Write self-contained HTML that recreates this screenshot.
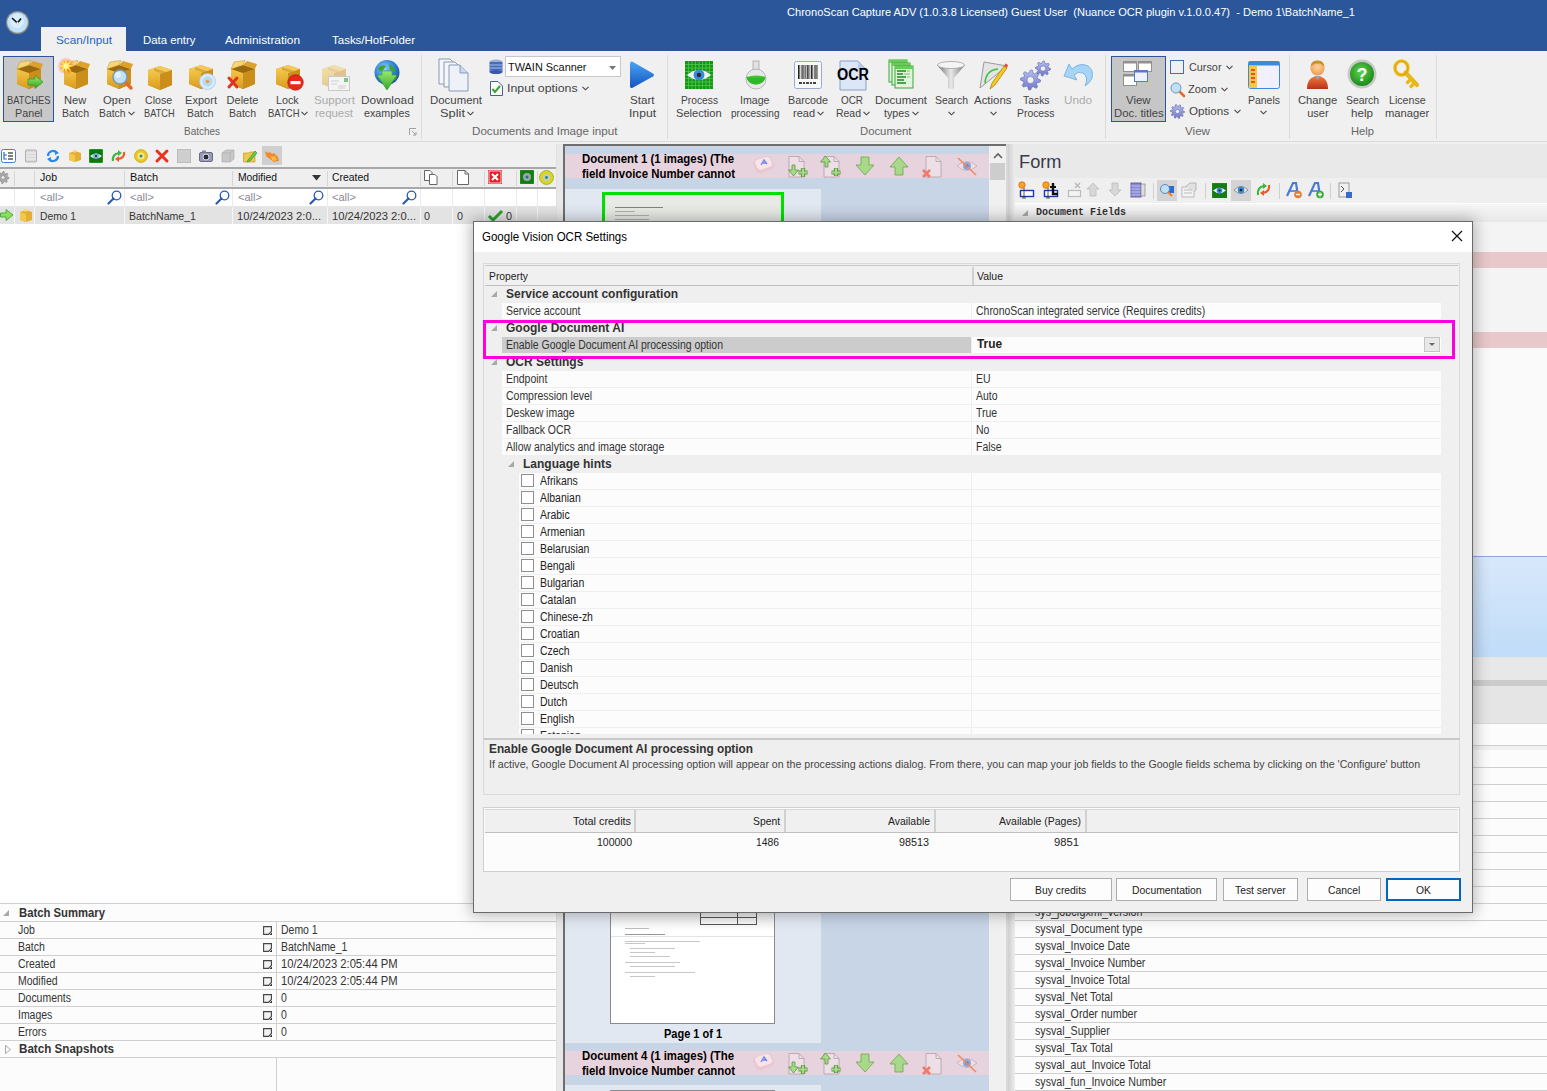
<!DOCTYPE html>
<html><head><meta charset="utf-8">
<style>
*{margin:0;padding:0;box-sizing:border-box}
html,body{width:1547px;height:1091px;overflow:hidden;background:#F0F0F0;font-family:"Liberation Sans",sans-serif;font-size:12px;color:#222;position:relative}
.a{position:absolute}
.t{position:absolute;white-space:nowrap}
svg{position:absolute;overflow:visible}
</style></head><body>

<svg width="0" height="0" style="position:absolute">
<defs>
<linearGradient id="gBoxF" x1="0" y1="0" x2="0" y2="1"><stop offset="0" stop-color="#F5C84A"/><stop offset="1" stop-color="#D89A1E"/></linearGradient>
<linearGradient id="gBoxS" x1="0" y1="0" x2="0" y2="1"><stop offset="0" stop-color="#E2AE34"/><stop offset="1" stop-color="#B98719"/></linearGradient>
<linearGradient id="gGreen" x1="0" y1="0" x2="0" y2="1"><stop offset="0" stop-color="#9BEA6A"/><stop offset="1" stop-color="#2FA52A"/></linearGradient>
<radialGradient id="gGlobe" cx="0.4" cy="0.35" r="0.7"><stop offset="0" stop-color="#8FD0FF"/><stop offset="0.6" stop-color="#2F7FD8"/><stop offset="1" stop-color="#1C4FA0"/></radialGradient>
<linearGradient id="gPlay" x1="0" y1="0" x2="0" y2="1"><stop offset="0" stop-color="#4AA3F5"/><stop offset="1" stop-color="#1356C0"/></linearGradient>
<radialGradient id="gHelp" cx="0.45" cy="0.4" r="0.6"><stop offset="0" stop-color="#5FD64A"/><stop offset="1" stop-color="#1C8A1C"/></radialGradient>
<radialGradient id="gUser" cx="0.5" cy="0.4" r="0.6"><stop offset="0" stop-color="#FFD3A0"/><stop offset="1" stop-color="#F09A4A"/></radialGradient>
<linearGradient id="gShirt" x1="0" y1="0" x2="0" y2="1"><stop offset="0" stop-color="#F07A3A"/><stop offset="1" stop-color="#B8321A"/></linearGradient>
<linearGradient id="gFunnel" x1="0" y1="0" x2="1" y2="0"><stop offset="0" stop-color="#6E6E6E"/><stop offset="0.5" stop-color="#E8E8E8"/><stop offset="1" stop-color="#7A7A7A"/></linearGradient>
<linearGradient id="gGear" x1="0" y1="0" x2="0" y2="1"><stop offset="0" stop-color="#B8BFF0"/><stop offset="1" stop-color="#6E78C8"/></linearGradient>
</defs></svg>
<div class="a" style="left:0px;top:0px;width:1547px;height:51px;background:#2B579A;"></div>
<div class="t" style="left:787.0px;top:5.2px;font-size:11px;line-height:14px;font-family:'Liberation Sans',sans-serif;font-weight:normal;color:#FFFFFF;transform:scaleX(1.0069);transform-origin:0 0;">ChronoScan Capture ADV (1.0.3.8 Licensed) Guest User  (Nuance OCR plugin v.1.0.0.47)  - Demo 1\BatchName_1</div>
<svg class="a" style="left:5px;top:10px" width="25" height="25" viewBox="0 0 25 25"><circle cx="12.5" cy="12.5" r="11.5" fill="#8E8A84"/><circle cx="12.5" cy="12.5" r="10.3" fill="#BFE2FA"/><circle cx="12" cy="11" r="7" fill="#D8EEFC"/><path d="M7 8 L12.5 13 L16 8.5" fill="none" stroke="#111" stroke-width="1.6"/><circle cx="12.5" cy="13" r="1.1" fill="#fff"/></svg>
<div class="a" style="left:41px;top:27px;width:85px;height:25px;background:#F0F0F0;"></div>
<div class="t" style="left:56.0px;top:33.2px;font-size:11px;line-height:14px;font-family:'Liberation Sans',sans-serif;font-weight:normal;color:#2066C8;transform:scaleX(1.0648);transform-origin:0 0;">Scan/Input</div>
<div class="t" style="left:142.5px;top:33.2px;font-size:11px;line-height:14px;font-family:'Liberation Sans',sans-serif;font-weight:normal;color:#FFFFFF;transform:scaleX(1.0346);transform-origin:0 0;">Data entry</div>
<div class="t" style="left:225.4px;top:33.2px;font-size:11px;line-height:14px;font-family:'Liberation Sans',sans-serif;font-weight:normal;color:#FFFFFF;transform:scaleX(1.0762);transform-origin:0 0;">Administration</div>
<div class="t" style="left:332.0px;top:33.2px;font-size:11px;line-height:14px;font-family:'Liberation Sans',sans-serif;font-weight:normal;color:#FFFFFF;transform:scaleX(1.0445);transform-origin:0 0;">Tasks/HotFolder</div>
<div class="a" style="left:0px;top:51px;width:1547px;height:91px;background:#F0F0F0;"></div>
<div class="a" style="left:0px;top:141px;width:1547px;height:1px;background:#DADADA;"></div>
<div class="a" style="left:421px;top:55px;width:1px;height:84px;background:#DADADA;"></div>
<div class="a" style="left:667px;top:55px;width:1px;height:84px;background:#DADADA;"></div>
<div class="a" style="left:1105px;top:55px;width:1px;height:84px;background:#DADADA;"></div>
<div class="a" style="left:1289px;top:55px;width:1px;height:84px;background:#DADADA;"></div>
<div class="a" style="left:1436px;top:55px;width:1px;height:84px;background:#DADADA;"></div>
<div class="t" style="left:184.0px;top:124.2px;font-size:11px;line-height:14px;font-family:'Liberation Sans',sans-serif;font-weight:normal;color:#666;transform:scaleX(0.9058);transform-origin:0 0;">Batches</div>
<div class="t" style="left:472.3px;top:124.2px;font-size:11px;line-height:14px;font-family:'Liberation Sans',sans-serif;font-weight:normal;color:#666;transform:scaleX(1.0569);transform-origin:0 0;">Documents and Image input</div>
<div class="t" style="left:860.2px;top:124.2px;font-size:11px;line-height:14px;font-family:'Liberation Sans',sans-serif;font-weight:normal;color:#666;transform:scaleX(1.0273);transform-origin:0 0;">Document</div>
<div class="t" style="left:1185.1px;top:124.2px;font-size:11px;line-height:14px;font-family:'Liberation Sans',sans-serif;font-weight:normal;color:#666;transform:scaleX(1.0574);transform-origin:0 0;">View</div>
<div class="t" style="left:1351.4px;top:124.2px;font-size:11px;line-height:14px;font-family:'Liberation Sans',sans-serif;font-weight:normal;color:#666;transform:scaleX(1.0167);transform-origin:0 0;">Help</div>
<svg class="a" style="left:409px;top:128px" width="8" height="8" viewBox="0 0 8 8"><path d="M0.5 0.5 H7 M0.5 0.5 V7" stroke="#A0A0A0" stroke-width="1" fill="none"/><path d="M3 3 L7 7 M7 4 V7 H4" stroke="#A0A0A0" stroke-width="1" fill="none"/></svg>
<div class="a" style="left:3px;top:56px;width:51px;height:66px;background:#C8C8C8;border:1px solid #2B579A;"></div>
<div class="a" style="left:1111px;top:56px;width:55px;height:66px;background:#C6C6C6;border:1px solid #2B579A;"></div>
<svg class="a" style="left:14px;top:60px" width="30" height="30" viewBox="0 0 30 30"><g><path d="M3 9 L15 5 L27 9 L27 24 L15 29 L3 24 Z" fill="url(#gBoxS)"/><path d="M3 9 L15 13 L15 29 L3 24 Z" fill="url(#gBoxF)"/><path d="M15 13 L27 9 L27 24 L15 29 Z" fill="#CC8E1A"/><path d="M3 9 L15 13 L27 9 L15 5Z" fill="#9A6A10"/><path d="M3 9 L6 2 L17 0.5 L15 5 Z" fill="#F7D67A" stroke="#C8921E" stroke-width="0.5"/><path d="M15 5 L27 9 L29 4 L19 1Z" fill="#DDA22A"/></g></svg>
<svg class="a" style="left:27px;top:75px" width="17" height="14" viewBox="0 0 17 14"><path d="M1 4 H8 V0.5 L16 7 L8 13.5 V10 H1 Z" fill="url(#gGreen)" stroke="#3A9A2A" stroke-width="0.8"/></svg>
<svg class="a" style="left:61px;top:60px" width="30" height="30" viewBox="0 0 30 30"><g><path d="M3 9 L15 5 L27 9 L27 24 L15 29 L3 24 Z" fill="url(#gBoxS)"/><path d="M3 9 L15 13 L15 29 L3 24 Z" fill="url(#gBoxF)"/><path d="M15 13 L27 9 L27 24 L15 29 Z" fill="#CC8E1A"/><path d="M3 9 L15 13 L27 9 L15 5Z" fill="#9A6A10"/><path d="M3 9 L6 2 L17 0.5 L15 5 Z" fill="#F7D67A" stroke="#C8921E" stroke-width="0.5"/><path d="M15 5 L27 9 L29 4 L19 1Z" fill="#DDA22A"/></g></svg>
<svg class="a" style="left:57px;top:57px" width="18" height="18" viewBox="0 0 18 18"><defs><radialGradient id="gSpark"><stop offset="0" stop-color="#FF3A1A" stop-opacity="0.9"/><stop offset="1" stop-color="#FF3A1A" stop-opacity="0"/></radialGradient></defs><circle cx="9" cy="9" r="9" fill="url(#gSpark)"/><path d="M9.0,1.0 L10.2,6.0 L14.7,3.3 L12.0,7.8 L17.0,9.0 L12.0,10.2 L14.7,14.7 L10.2,12.0 L9.0,17.0 L7.8,12.0 L3.3,14.7 L6.0,10.2 L1.0,9.0 L6.0,7.8 L3.3,3.3 L7.8,6.0 Z" fill="#FFE63A"/><circle cx="9" cy="9" r="2.5" fill="#FFF6A0"/></svg>
<svg class="a" style="left:104px;top:60px" width="30" height="30" viewBox="0 0 30 30"><g><path d="M3 9 L15 5 L27 9 L27 24 L15 29 L3 24 Z" fill="url(#gBoxS)"/><path d="M3 9 L15 13 L15 29 L3 24 Z" fill="url(#gBoxF)"/><path d="M15 13 L27 9 L27 24 L15 29 Z" fill="#CC8E1A"/><path d="M3 9 L15 13 L27 9 L15 5Z" fill="#9A6A10"/><path d="M3 9 L6 2 L17 0.5 L15 5 Z" fill="#F7D67A" stroke="#C8921E" stroke-width="0.5"/><path d="M15 5 L27 9 L29 4 L19 1Z" fill="#DDA22A"/></g></svg>
<svg class="a" style="left:111px;top:68px" width="22" height="22" viewBox="0 0 22 22"><path d="M13 13 L20 20" stroke="#E86A2A" stroke-width="3.5" stroke-linecap="round"/><circle cx="9" cy="9" r="7" fill="#BFE0F5" stroke="#7A9AB0" stroke-width="1.5"/><circle cx="7" cy="7" r="3" fill="#E8F6FF" opacity="0.8"/></svg>
<svg class="a" style="left:145px;top:61px" width="30" height="30" viewBox="0 0 30 30"><g><path d="M3 9 L15 5 L27 9 L27 24 L15 29 L3 24 Z" fill="url(#gBoxS)"/><path d="M3 9 L15 13 L15 29 L3 24 Z" fill="url(#gBoxF)"/><path d="M15 13 L27 9 L27 24 L15 29 Z" fill="#CC8E1A"/><path d="M3 9 L15 5 L27 9 L15 13 Z" fill="#F2C95A"/><path d="M9 7 L21 11 L21 14 L18 13 L9 10Z" fill="#C99524" opacity="0.6"/></g></svg>
<svg class="a" style="left:186px;top:60px" width="30" height="30" viewBox="0 0 30 30"><g><path d="M3 9 L15 5 L27 9 L27 24 L15 29 L3 24 Z" fill="url(#gBoxS)"/><path d="M3 9 L15 13 L15 29 L3 24 Z" fill="url(#gBoxF)"/><path d="M15 13 L27 9 L27 24 L15 29 Z" fill="#CC8E1A"/><path d="M3 9 L15 5 L27 9 L15 13 Z" fill="#F2C95A"/><path d="M9 7 L21 11 L21 14 L18 13 L9 10Z" fill="#C99524" opacity="0.6"/></g></svg>
<svg class="a" style="left:199px;top:73px" width="17" height="17" viewBox="0 0 17 17"><circle cx="8.5" cy="8.5" r="8" fill="#D8EBFA" stroke="#A8C8E8" stroke-width="0.8"/><circle cx="8.5" cy="8.5" r="5" fill="#B8D8F5"/><circle cx="8.5" cy="8.5" r="1.8" fill="#E8A23A"/></svg>
<svg class="a" style="left:228px;top:60px" width="30" height="30" viewBox="0 0 30 30"><g><path d="M3 9 L15 5 L27 9 L27 24 L15 29 L3 24 Z" fill="url(#gBoxS)"/><path d="M3 9 L15 13 L15 29 L3 24 Z" fill="url(#gBoxF)"/><path d="M15 13 L27 9 L27 24 L15 29 Z" fill="#CC8E1A"/><path d="M3 9 L15 13 L27 9 L15 5Z" fill="#9A6A10"/><path d="M3 9 L6 2 L17 0.5 L15 5 Z" fill="#F7D67A" stroke="#C8921E" stroke-width="0.5"/><path d="M15 5 L27 9 L29 4 L19 1Z" fill="#DDA22A"/></g></svg>
<svg class="a" style="left:227px;top:76px" width="12" height="13" viewBox="0 0 12 13"><path d="M2 2 L10 11 M10 2 L2 11" stroke="#E2341E" stroke-width="3" stroke-linecap="round"/></svg>
<svg class="a" style="left:273px;top:60px" width="30" height="30" viewBox="0 0 30 30"><g><path d="M3 9 L15 5 L27 9 L27 24 L15 29 L3 24 Z" fill="url(#gBoxS)"/><path d="M3 9 L15 13 L15 29 L3 24 Z" fill="url(#gBoxF)"/><path d="M15 13 L27 9 L27 24 L15 29 Z" fill="#CC8E1A"/><path d="M3 9 L15 5 L27 9 L15 13 Z" fill="#F2C95A"/><path d="M9 7 L21 11 L21 14 L18 13 L9 10Z" fill="#C99524" opacity="0.6"/></g></svg>
<svg class="a" style="left:287px;top:74px" width="17" height="17" viewBox="0 0 17 17"><circle cx="8.5" cy="8.5" r="7.8" fill="#E8281A" stroke="#9A1A10" stroke-width="0.6"/><rect x="3.5" y="7" width="10" height="3.2" fill="#FFF"/></svg>
<svg class="a" style="left:319px;top:60px" width="30" height="30" viewBox="0 0 30 30"><g opacity="0.45"><path d="M3 9 L15 5 L27 9 L27 24 L15 29 L3 24 Z" fill="url(#gBoxS)"/><path d="M3 9 L15 13 L15 29 L3 24 Z" fill="url(#gBoxF)"/><path d="M15 13 L27 9 L27 24 L15 29 Z" fill="#CC8E1A"/><path d="M3 9 L15 5 L27 9 L15 13 Z" fill="#F2C95A"/><path d="M9 7 L21 11 L21 14 L18 13 L9 10Z" fill="#C99524" opacity="0.6"/></g></svg>
<svg class="a" style="left:328px;top:76px" width="22" height="15" viewBox="0 0 22 15"><rect x="0.5" y="0.5" width="21" height="14" fill="#F4F4F4" stroke="#C8C8C8"/><rect x="16" y="2" width="4" height="4" fill="#7CC87C"/><path d="M3 5h8M3 8h6M10 10h8M10 12h7" stroke="#CFCFCF"/></svg>
<svg class="a" style="left:374px;top:60px" width="27" height="31" viewBox="0 0 27 31"><circle cx="13" cy="12.5" r="12.5" fill="url(#gGlobe)"/><path d="M4 8 Q8 4 12 6 Q10 10 6 12 Z M15 4 Q20 6 22 11 Q18 12 16 9Z M18 16 Q22 15 23 18 Q20 21 18 20Z" fill="#3DA52E"/><path d="M3 15 H8 V11 H18 V15 H23 L13 30 Z" fill="url(#gGreen)" stroke="#2E9A24" stroke-width="0.6"/></svg>
<div class="t" style="left:6.8px;top:93.2px;font-size:11px;line-height:14px;font-family:'Liberation Sans',sans-serif;font-weight:normal;color:#444;transform:scaleX(0.8486);transform-origin:0 0;">BATCHES</div>
<div class="t" style="left:14.8px;top:106.2px;font-size:11px;line-height:14px;font-family:'Liberation Sans',sans-serif;font-weight:normal;color:#444;transform:scaleX(0.9775);transform-origin:0 0;">Panel</div>
<div class="t" style="left:63.9px;top:93.2px;font-size:11px;line-height:14px;font-family:'Liberation Sans',sans-serif;font-weight:normal;color:#444;transform:scaleX(1.0089);transform-origin:0 0;">New</div>
<div class="t" style="left:61.5px;top:106.2px;font-size:11px;line-height:14px;font-family:'Liberation Sans',sans-serif;font-weight:normal;color:#444;transform:scaleX(0.9599);transform-origin:0 0;">Batch</div>
<div class="t" style="left:102.7px;top:93.2px;font-size:11px;line-height:14px;font-family:'Liberation Sans',sans-serif;font-weight:normal;color:#444;transform:scaleX(1.0294);transform-origin:0 0;">Open</div>
<div class="t" style="left:99.2px;top:106.2px;font-size:11px;line-height:14px;font-family:'Liberation Sans',sans-serif;font-weight:normal;color:#444;transform:scaleX(0.9421);transform-origin:0 0;">Batch</div>
<svg class="a" style="left:127.75px;top:111px" width="7" height="5" viewBox="0 0 7 5"><path d="M0.5 0.8 L3.5 3.8 L6.5 0.8" fill="none" stroke="#444" stroke-width="1.1"/></svg>
<div class="t" style="left:145.4px;top:93.2px;font-size:11px;line-height:14px;font-family:'Liberation Sans',sans-serif;font-weight:normal;color:#444;transform:scaleX(0.9637);transform-origin:0 0;">Close</div>
<div class="t" style="left:143.7px;top:106.2px;font-size:11px;line-height:14px;font-family:'Liberation Sans',sans-serif;font-weight:normal;color:#444;transform:scaleX(0.8391);transform-origin:0 0;">BATCH</div>
<div class="t" style="left:184.5px;top:93.2px;font-size:11px;line-height:14px;font-family:'Liberation Sans',sans-serif;font-weight:normal;color:#444;transform:scaleX(1.0066);transform-origin:0 0;">Export</div>
<div class="t" style="left:187.2px;top:106.2px;font-size:11px;line-height:14px;font-family:'Liberation Sans',sans-serif;font-weight:normal;color:#444;transform:scaleX(0.9421);transform-origin:0 0;">Batch</div>
<div class="t" style="left:226.6px;top:93.2px;font-size:11px;line-height:14px;font-family:'Liberation Sans',sans-serif;font-weight:normal;color:#444;">Delete</div>
<div class="t" style="left:229.0px;top:106.2px;font-size:11px;line-height:14px;font-family:'Liberation Sans',sans-serif;font-weight:normal;color:#444;transform:scaleX(0.9599);transform-origin:0 0;">Batch</div>
<div class="t" style="left:275.9px;top:93.2px;font-size:11px;line-height:14px;font-family:'Liberation Sans',sans-serif;font-weight:normal;color:#444;transform:scaleX(0.9770);transform-origin:0 0;">Lock</div>
<div class="t" style="left:267.6px;top:106.2px;font-size:11px;line-height:14px;font-family:'Liberation Sans',sans-serif;font-weight:normal;color:#444;transform:scaleX(0.8638);transform-origin:0 0;">BATCH</div>
<svg class="a" style="left:301.05px;top:111px" width="7" height="5" viewBox="0 0 7 5"><path d="M0.5 0.8 L3.5 3.8 L6.5 0.8" fill="none" stroke="#444" stroke-width="1.1"/></svg>
<div class="t" style="left:313.6px;top:93.2px;font-size:11px;line-height:14px;font-family:'Liberation Sans',sans-serif;font-weight:normal;color:#ABABAB;transform:scaleX(1.0616);transform-origin:0 0;">Support</div>
<div class="t" style="left:315.0px;top:106.2px;font-size:11px;line-height:14px;font-family:'Liberation Sans',sans-serif;font-weight:normal;color:#ABABAB;transform:scaleX(1.0358);transform-origin:0 0;">request</div>
<div class="t" style="left:360.6px;top:93.2px;font-size:11px;line-height:14px;font-family:'Liberation Sans',sans-serif;font-weight:normal;color:#444;transform:scaleX(1.0794);transform-origin:0 0;">Download</div>
<div class="t" style="left:364.1px;top:106.2px;font-size:11px;line-height:14px;font-family:'Liberation Sans',sans-serif;font-weight:normal;color:#444;transform:scaleX(0.9729);transform-origin:0 0;">examples</div>
<svg class="a" style="left:438px;top:58px" width="33" height="34" viewBox="0 0 33 34"><path d="M1 1 H12 L18 7 V26 H1 Z" fill="#F4F6FA" stroke="#8A9AB8" stroke-width="1"/><path d="M6 4 H17 L23 10 V29 H6 Z" fill="#F4F6FA" stroke="#8A9AB8" stroke-width="1"/><path d="M11 7 H22 L30 15 V33 H11 Z" fill="#EEF2F8" stroke="#8A9AB8" stroke-width="1"/><path d="M22 7 V15 H30" fill="#C8D8EE" stroke="#8A9AB8" stroke-width="1"/></svg>
<div class="t" style="left:430.0px;top:93.2px;font-size:11px;line-height:14px;font-family:'Liberation Sans',sans-serif;font-weight:normal;color:#444;transform:scaleX(1.0373);transform-origin:0 0;">Document</div>
<div class="t" style="left:439.5px;top:106.2px;font-size:11px;line-height:14px;font-family:'Liberation Sans',sans-serif;font-weight:normal;color:#444;transform:scaleX(1.1683);transform-origin:0 0;">Split</div>
<svg class="a" style="left:466.5px;top:111px" width="7" height="5" viewBox="0 0 7 5"><path d="M0.5 0.8 L3.5 3.8 L6.5 0.8" fill="none" stroke="#444" stroke-width="1.1"/></svg>
<svg class="a" style="left:489px;top:59px" width="14" height="15" viewBox="0 0 14 15"><ellipse cx="7" cy="3" rx="6.5" ry="2.5" fill="#9AB0D8"/><rect x="0.5" y="3" width="13" height="10" fill="#4A6AB8"/><path d="M0.5 6h13M0.5 9h13M0.5 12h13" stroke="#9EC0F0" stroke-width="1"/><ellipse cx="7" cy="13" rx="6.5" ry="2" fill="#3A5AA8"/></svg>
<div class="a" style="left:505px;top:56px;width:116px;height:21px;background:#FFFFFF;border:1px solid #C8C8C8;"></div>
<div class="t" style="left:507.5px;top:60.2px;font-size:11px;line-height:14px;font-family:'Liberation Sans',sans-serif;font-weight:normal;color:#111;transform:scaleX(0.9930);transform-origin:0 0;">TWAIN Scanner</div>
<svg class="a" style="left:609px;top:66px" width="7" height="4" viewBox="0 0 7 4"><path d="M0 0 H7 L3.5 4 Z" fill="#777"/></svg>
<svg class="a" style="left:490px;top:81px" width="13" height="15" viewBox="0 0 13 15"><path d="M0.5 0.5 H8 L12.5 5 V14.5 H0.5 Z" fill="#FAFAFA" stroke="#4A6090" stroke-width="1"/><path d="M2.5 8 L5 11 L10 5" fill="none" stroke="#2EA82E" stroke-width="2"/></svg>
<div class="t" style="left:507.0px;top:81.2px;font-size:11px;line-height:14px;font-family:'Liberation Sans',sans-serif;font-weight:normal;color:#444;transform:scaleX(1.1208);transform-origin:0 0;">Input options</div>
<svg class="a" style="left:582px;top:86px" width="7" height="5" viewBox="0 0 7 5"><path d="M0.5 0.8 L3.5 3.8 L6.5 0.8" fill="none" stroke="#444" stroke-width="1.1"/></svg>
<svg class="a" style="left:629px;top:60px" width="26" height="30" viewBox="0 0 26 30"><path d="M3 1.5 Q1 1 1 4 V26 Q1 29 4 27.5 L24 16.5 Q26 15 24 13.5 L4 2 Z" fill="url(#gPlay)"/></svg>
<div class="t" style="left:629.8px;top:93.2px;font-size:11px;line-height:14px;font-family:'Liberation Sans',sans-serif;font-weight:normal;color:#444;transform:scaleX(1.0547);transform-origin:0 0;">Start</div>
<div class="t" style="left:628.5px;top:106.2px;font-size:11px;line-height:14px;font-family:'Liberation Sans',sans-serif;font-weight:normal;color:#444;transform:scaleX(1.1037);transform-origin:0 0;">Input</div>
<svg class="a" style="left:685px;top:61px" width="28" height="28" viewBox="0 0 28 28"><rect width="28" height="28" fill="#119A11"/><path d="M3.5 0 V28 M0 3.5 H28" stroke="#5CC85C" stroke-width="0.7"/><path d="M7.0 0 V28 M0 7.0 H28" stroke="#5CC85C" stroke-width="0.7"/><path d="M10.5 0 V28 M0 10.5 H28" stroke="#5CC85C" stroke-width="0.7"/><path d="M14.0 0 V28 M0 14.0 H28" stroke="#5CC85C" stroke-width="0.7"/><path d="M17.5 0 V28 M0 17.5 H28" stroke="#5CC85C" stroke-width="0.7"/><path d="M21.0 0 V28 M0 21.0 H28" stroke="#5CC85C" stroke-width="0.7"/><path d="M24.5 0 V28 M0 24.5 H28" stroke="#5CC85C" stroke-width="0.7"/><path d="M2 14 Q14 4 26 14 Q14 24 2 14 Z" fill="#F2F2F2"/><circle cx="14" cy="14" r="5.5" fill="#3A8AD8"/><circle cx="14" cy="14" r="2.2" fill="#2A2A2A"/></svg>
<div class="t" style="left:680.5px;top:93.2px;font-size:11px;line-height:14px;font-family:'Liberation Sans',sans-serif;font-weight:normal;color:#444;transform:scaleX(0.9312);transform-origin:0 0;">Process</div>
<div class="t" style="left:676.1px;top:106.2px;font-size:11px;line-height:14px;font-family:'Liberation Sans',sans-serif;font-weight:normal;color:#444;transform:scaleX(1.0099);transform-origin:0 0;">Selection</div>
<svg class="a" style="left:744px;top:60px" width="24" height="30" viewBox="0 0 24 30"><rect x="9" y="1" width="6" height="11" fill="#E2E2E2" stroke="#A8A8A8" stroke-width="0.8"/><circle cx="12" cy="19" r="10" fill="#E8E8E8" stroke="#A8A8A8" stroke-width="0.8"/><path d="M2.3 17 Q12 14 21.7 17 A10 10 0 0 1 2.3 17 Z" fill="#3FCB2A"/><path d="M2.5 17.5 A10 10 0 0 0 21.5 17.5 Z" fill="#2EB82A"/></svg>
<div class="t" style="left:740.2px;top:93.2px;font-size:11px;line-height:14px;font-family:'Liberation Sans',sans-serif;font-weight:normal;color:#444;transform:scaleX(0.9650);transform-origin:0 0;">Image</div>
<div class="t" style="left:730.8px;top:106.2px;font-size:11px;line-height:14px;font-family:'Liberation Sans',sans-serif;font-weight:normal;color:#444;transform:scaleX(0.9118);transform-origin:0 0;">processing</div>
<svg class="a" style="left:794px;top:61px" width="28" height="28" viewBox="0 0 28 28"><rect x="0.5" y="0.5" width="27" height="27" rx="2" fill="#F8F8F8" stroke="#9AAAD0"/><rect x="4.00" y="4" width="1.1" height="14" fill="#222"/><rect x="5.45" y="4" width="0.6" height="14" fill="#222"/><rect x="6.90" y="4" width="0.6" height="14" fill="#222"/><rect x="8.35" y="4" width="1.1" height="14" fill="#222"/><rect x="9.80" y="4" width="0.6" height="14" fill="#222"/><rect x="11.25" y="4" width="0.6" height="14" fill="#222"/><rect x="12.70" y="4" width="1.1" height="14" fill="#222"/><rect x="14.15" y="4" width="0.6" height="14" fill="#222"/><rect x="15.60" y="4" width="0.6" height="14" fill="#222"/><rect x="17.05" y="4" width="1.1" height="14" fill="#222"/><rect x="18.50" y="4" width="0.6" height="14" fill="#222"/><rect x="19.95" y="4" width="0.6" height="14" fill="#222"/><rect x="21.40" y="4" width="1.1" height="14" fill="#222"/><rect x="22.85" y="4" width="0.6" height="14" fill="#222"/><path d="M5 22h3M9 22h2M12 22h3M16 22h2M19 22h3" stroke="#444" stroke-width="2"/></svg>
<div class="t" style="left:788.0px;top:93.2px;font-size:11px;line-height:14px;font-family:'Liberation Sans',sans-serif;font-weight:normal;color:#444;transform:scaleX(0.9764);transform-origin:0 0;">Barcode</div>
<div class="t" style="left:793.0px;top:106.2px;font-size:11px;line-height:14px;font-family:'Liberation Sans',sans-serif;font-weight:normal;color:#444;">read</div>
<svg class="a" style="left:817.0px;top:111px" width="7" height="5" viewBox="0 0 7 5"><path d="M0.5 0.8 L3.5 3.8 L6.5 0.8" fill="none" stroke="#444" stroke-width="1.1"/></svg>
<svg class="a" style="left:836px;top:60px" width="33" height="31" viewBox="0 0 33 31"><path d="M4 1 H22 L30 9 V30 H4 Z" fill="#DCE6F6" stroke="#8AA0C8" stroke-width="1"/><path d="M22 1 V9 H30" fill="#B8CCEA"/></svg>
<div class="t" style="left:836.5px;top:64.5px;font-size:16px;line-height:20px;font-family:'Liberation Sans',sans-serif;font-weight:bold;color:#000;transform:scaleX(0.9000);transform-origin:0 0;">OCR</div>
<div class="t" style="left:841.0px;top:93.2px;font-size:11px;line-height:14px;font-family:'Liberation Sans',sans-serif;font-weight:normal;color:#444;transform:scaleX(0.9000);transform-origin:0 0;">OCR</div>
<div class="t" style="left:835.5px;top:106.2px;font-size:11px;line-height:14px;font-family:'Liberation Sans',sans-serif;font-weight:normal;color:#444;transform:scaleX(0.9507);transform-origin:0 0;">Read</div>
<svg class="a" style="left:862.5px;top:111px" width="7" height="5" viewBox="0 0 7 5"><path d="M0.5 0.8 L3.5 3.8 L6.5 0.8" fill="none" stroke="#444" stroke-width="1.1"/></svg>
<svg class="a" style="left:887px;top:59px" width="28" height="31" viewBox="0 0 28 31"><rect x="2" y="1" width="18" height="22" fill="#E2F4DC" stroke="#3AA83A" stroke-width="1"/><rect x="2" y="1" width="18" height="3" fill="#6ACB5A"/><rect x="5" y="4" width="18" height="22" fill="#E2F4DC" stroke="#3AA83A" stroke-width="1"/><rect x="5" y="4" width="18" height="3" fill="#6ACB5A"/><rect x="8" y="7" width="18" height="22" fill="#E2F4DC" stroke="#3AA83A" stroke-width="1"/><rect x="8" y="7" width="18" height="3" fill="#6ACB5A"/><path d="M10 12h9M10 15h6M10 18h9M10 21h7M10 24h9" stroke="#1E8A1E" stroke-width="1.6"/><path d="M20 12h3M17 15h6M20 18h3" stroke="#9AD88A" stroke-width="1.4"/></svg>
<div class="t" style="left:875.0px;top:93.2px;font-size:11px;line-height:14px;font-family:'Liberation Sans',sans-serif;font-weight:normal;color:#444;transform:scaleX(1.0373);transform-origin:0 0;">Document</div>
<div class="t" style="left:884.2px;top:106.2px;font-size:11px;line-height:14px;font-family:'Liberation Sans',sans-serif;font-weight:normal;color:#444;transform:scaleX(0.9699);transform-origin:0 0;">types</div>
<svg class="a" style="left:911.75px;top:111px" width="7" height="5" viewBox="0 0 7 5"><path d="M0.5 0.8 L3.5 3.8 L6.5 0.8" fill="none" stroke="#444" stroke-width="1.1"/></svg>
<svg class="a" style="left:936px;top:59px" width="30" height="32" viewBox="0 0 30 32"><path d="M1 6 Q15 -1 29 6 L18 19 V29 Q15 31 12 29 V19 Z" fill="url(#gFunnel)"/><ellipse cx="15" cy="6" rx="13.5" ry="3.5" fill="#F4F4F4" stroke="#9A9A9A" stroke-width="0.7"/></svg>
<div class="t" style="left:934.5px;top:93.2px;font-size:11px;line-height:14px;font-family:'Liberation Sans',sans-serif;font-weight:normal;color:#444;transform:scaleX(0.9469);transform-origin:0 0;">Search</div>
<svg class="a" style="left:948px;top:111px" width="7" height="5" viewBox="0 0 7 5"><path d="M0.5 0.8 L3.5 3.8 L6.5 0.8" fill="none" stroke="#444" stroke-width="1.1"/></svg>
<svg class="a" style="left:978px;top:60px" width="30" height="31" viewBox="0 0 30 31"><path d="M2 28 L6 2 L29 6 Z" fill="#E4E4E4" stroke="#9A9A9A" stroke-width="1"/><path d="M7 23 Q8 10 20 9" fill="none" stroke="#3CC23C" stroke-width="1.6"/><path d="M12 29 L14 23 L26 6 L29 8 L17 25 Z" fill="#F5C81E" stroke="#A07A10" stroke-width="0.7"/><path d="M26 6 L29 8 L30 5 L27.5 3.5Z" fill="#E84A3A"/></svg>
<div class="t" style="left:974.2px;top:93.2px;font-size:11px;line-height:14px;font-family:'Liberation Sans',sans-serif;font-weight:normal;color:#444;transform:scaleX(1.0396);transform-origin:0 0;">Actions</div>
<svg class="a" style="left:990px;top:111px" width="7" height="5" viewBox="0 0 7 5"><path d="M0.5 0.8 L3.5 3.8 L6.5 0.8" fill="none" stroke="#444" stroke-width="1.1"/></svg>
<svg class="a" style="left:1020px;top:60px" width="32" height="31" viewBox="0 0 32 31"><path d="M20.50,20.00 L20.31,21.95 L17.15,22.76 L16.49,24.00 L17.57,27.07 L16.06,28.31 L13.26,26.65 L11.90,27.06 L10.50,30.00 L8.55,29.81 L7.74,26.65 L6.50,25.99 L3.43,27.07 L2.19,25.56 L3.85,22.76 L3.44,21.40 L0.50,20.00 L0.69,18.05 L3.85,17.24 L4.51,16.00 L3.43,12.93 L4.94,11.69 L7.74,13.35 L9.10,12.94 L10.50,10.00 L12.45,10.19 L13.26,13.35 L14.50,14.01 L17.57,12.93 L18.81,14.44 L17.15,17.24 L17.56,18.60 Z" fill="url(#gGear)" stroke="#5A63A8" stroke-width="0.6"/><circle cx="10.5" cy="20" r="3.50" fill="#F0F0F0" stroke="#5A63A8" stroke-width="0.5"/><path d="M30.50,8.50 L30.36,9.96 L27.99,10.57 L27.49,11.50 L28.30,13.80 L27.17,14.74 L25.07,13.49 L24.05,13.80 L23.00,16.00 L21.54,15.86 L20.93,13.49 L20.00,12.99 L17.70,13.80 L16.76,12.67 L18.01,10.57 L17.70,9.55 L15.50,8.50 L15.64,7.04 L18.01,6.43 L18.51,5.50 L17.70,3.20 L18.83,2.26 L20.93,3.51 L21.95,3.20 L23.00,1.00 L24.46,1.14 L25.07,3.51 L26.00,4.01 L28.30,3.20 L29.24,4.33 L27.99,6.43 L28.30,7.45 Z" fill="url(#gGear)" stroke="#5A63A8" stroke-width="0.6"/><circle cx="23" cy="8.5" r="2.62" fill="#F0F0F0" stroke="#5A63A8" stroke-width="0.5"/></svg>
<div class="t" style="left:1022.8px;top:93.2px;font-size:11px;line-height:14px;font-family:'Liberation Sans',sans-serif;font-weight:normal;color:#444;transform:scaleX(0.9425);transform-origin:0 0;">Tasks</div>
<div class="t" style="left:1017.2px;top:106.2px;font-size:11px;line-height:14px;font-family:'Liberation Sans',sans-serif;font-weight:normal;color:#444;transform:scaleX(0.9438);transform-origin:0 0;">Process</div>
<svg class="a" style="left:1063px;top:61px" width="31" height="26" viewBox="0 0 31 26"><path d="M1 15 L6 3 L9 8 Q17 1 25 5 Q31 9 29 17 Q27 22 22 25 Q26 16 20 12 Q15 10 11 14 L14 19 Z" fill="#A8D4F6" stroke="#6AAAE0" stroke-width="0.8"/></svg>
<div class="t" style="left:1064.0px;top:93.2px;font-size:11px;line-height:14px;font-family:'Liberation Sans',sans-serif;font-weight:normal;color:#ABABAB;transform:scaleX(1.0648);transform-origin:0 0;">Undo</div>
<svg class="a" style="left:1123px;top:61px" width="30" height="28" viewBox="0 0 30 28"><rect x="0.5" y="0.5" width="13" height="10" fill="#FFF" stroke="#909090"/><rect x="0.5" y="0.5" width="13" height="2" fill="#909090"/><rect x="15.5" y="0.5" width="13" height="10" fill="#FFF" stroke="#909090"/><rect x="15.5" y="0.5" width="13" height="2" fill="#909090"/><rect x="0.5" y="13.5" width="13" height="11" fill="#FFF" stroke="#909090"/><rect x="0.5" y="13.5" width="13" height="2" fill="#909090"/><rect x="11.5" y="9.5" width="13" height="11" fill="#EEF2FF" stroke="#5A78C8"/><rect x="11.5" y="9.5" width="13" height="2" fill="#5A78C8"/></svg>
<div class="t" style="left:1126.2px;top:93.2px;font-size:11px;line-height:14px;font-family:'Liberation Sans',sans-serif;font-weight:normal;color:#444;transform:scaleX(1.0362);transform-origin:0 0;">View</div>
<div class="t" style="left:1113.7px;top:106.2px;font-size:11px;line-height:14px;font-family:'Liberation Sans',sans-serif;font-weight:normal;color:#444;transform:scaleX(1.0292);transform-origin:0 0;">Doc. titles</div>
<div class="a" style="left:1170px;top:60px;width:14px;height:14px;border:1px solid #4A6AC0;"></div>
<div class="t" style="left:1189.0px;top:60.2px;font-size:11px;line-height:14px;font-family:'Liberation Sans',sans-serif;font-weight:normal;color:#444;transform:scaleX(0.9848);transform-origin:0 0;">Cursor</div>
<svg class="a" style="left:1226px;top:65px" width="7" height="5" viewBox="0 0 7 5"><path d="M0.5 0.8 L3.5 3.8 L6.5 0.8" fill="none" stroke="#444" stroke-width="1.1"/></svg>
<svg class="a" style="left:1170px;top:82px" width="15" height="15" viewBox="0 0 15 15"><path d="M8 8 L14 14" stroke="#E86A2A" stroke-width="2.6" stroke-linecap="round"/><circle cx="6" cy="6" r="5" fill="#BFE0F5" stroke="#6A9AC0" stroke-width="1"/></svg>
<div class="t" style="left:1188.0px;top:82.2px;font-size:11px;line-height:14px;font-family:'Liberation Sans',sans-serif;font-weight:normal;color:#444;transform:scaleX(1.0137);transform-origin:0 0;">Zoom</div>
<svg class="a" style="left:1221px;top:87px" width="7" height="5" viewBox="0 0 7 5"><path d="M0.5 0.8 L3.5 3.8 L6.5 0.8" fill="none" stroke="#444" stroke-width="1.1"/></svg>
<svg class="a" style="left:1170px;top:104px" width="15" height="15" viewBox="0 0 15 15"><path d="M14.50,7.50 L14.41,8.60 L12.29,9.06 L11.99,9.79 L13.16,11.61 L12.45,12.45 L10.46,11.58 L9.79,11.99 L9.66,14.16 L8.60,14.41 L7.50,12.54 L6.71,12.48 L5.34,14.16 L4.32,13.74 L4.54,11.58 L3.94,11.06 L1.84,11.61 L1.26,10.68 L2.71,9.06 L2.52,8.29 L0.50,7.50 L0.59,6.40 L2.71,5.94 L3.01,5.21 L1.84,3.39 L2.55,2.55 L4.54,3.42 L5.21,3.01 L5.34,0.84 L6.40,0.59 L7.50,2.46 L8.29,2.52 L9.66,0.84 L10.68,1.26 L10.46,3.42 L11.06,3.94 L13.16,3.39 L13.74,4.32 L12.29,5.94 L12.48,6.71 Z" fill="url(#gGear)" stroke="#5A63A8" stroke-width="0.6"/><circle cx="7.5" cy="7.5" r="2.10" fill="#F0F0F0" stroke="#5A63A8" stroke-width="0.5"/></svg>
<div class="t" style="left:1189.0px;top:104.2px;font-size:11px;line-height:14px;font-family:'Liberation Sans',sans-serif;font-weight:normal;color:#444;transform:scaleX(1.0552);transform-origin:0 0;">Options</div>
<svg class="a" style="left:1234px;top:109px" width="7" height="5" viewBox="0 0 7 5"><path d="M0.5 0.8 L3.5 3.8 L6.5 0.8" fill="none" stroke="#444" stroke-width="1.1"/></svg>
<svg class="a" style="left:1248px;top:61px" width="32" height="28" viewBox="0 0 32 28"><rect x="0.5" y="0.5" width="31" height="27" rx="2" fill="#F2F0FF" stroke="#3A8AE0"/><rect x="0.5" y="0.5" width="31" height="4" fill="#3A8AE0"/><rect x="1" y="5" width="8" height="22" fill="#F5C842"/><path d="M3 9h4M3 13h4M3 17h4M3 21h4" stroke="#E8502A" stroke-width="2"/></svg>
<div class="t" style="left:1247.5px;top:93.2px;font-size:11px;line-height:14px;font-family:'Liberation Sans',sans-serif;font-weight:normal;color:#444;transform:scaleX(0.9515);transform-origin:0 0;">Panels</div>
<svg class="a" style="left:1260px;top:110px" width="7" height="5" viewBox="0 0 7 5"><path d="M0.5 0.8 L3.5 3.8 L6.5 0.8" fill="none" stroke="#444" stroke-width="1.1"/></svg>
<svg class="a" style="left:1306px;top:59px" width="23" height="31" viewBox="0 0 23 31"><path d="M1 30 Q1 18 11.5 17 Q22 18 22 30 Z" fill="url(#gShirt)"/><path d="M8 17 L11.5 21 L15 17" fill="#9AA0A8"/><circle cx="11.5" cy="9.5" r="7" fill="url(#gUser)"/><path d="M4.5 8 Q5 1 11.5 1.5 Q18 1 18.5 8 Q16 4 11.5 4.5 Q7 4 4.5 8 Z" fill="#C8922A"/></svg>
<div class="t" style="left:1298.3px;top:93.2px;font-size:11px;line-height:14px;font-family:'Liberation Sans',sans-serif;font-weight:normal;color:#444;transform:scaleX(1.0200);transform-origin:0 0;">Change</div>
<div class="t" style="left:1307.2px;top:106.2px;font-size:11px;line-height:14px;font-family:'Liberation Sans',sans-serif;font-weight:normal;color:#444;">user</div>
<svg class="a" style="left:1347px;top:59px" width="30" height="30" viewBox="0 0 30 30"><circle cx="15" cy="15" r="14.5" fill="#C8C8C8"/><circle cx="15" cy="15" r="12" fill="url(#gHelp)"/><text x="15" y="21.5" font-family="Liberation Sans" font-weight="bold" font-size="18" fill="#FFF" text-anchor="middle">?</text></svg>
<div class="t" style="left:1345.5px;top:93.2px;font-size:11px;line-height:14px;font-family:'Liberation Sans',sans-serif;font-weight:normal;color:#444;transform:scaleX(0.9469);transform-origin:0 0;">Search</div>
<div class="t" style="left:1351.0px;top:106.2px;font-size:11px;line-height:14px;font-family:'Liberation Sans',sans-serif;font-weight:normal;color:#444;transform:scaleX(1.0579);transform-origin:0 0;">help</div>
<svg class="a" style="left:1393px;top:59px" width="29" height="32" viewBox="0 0 29 32"><ellipse cx="8.5" cy="9" rx="6.5" ry="7" fill="none" stroke="#F0C020" stroke-width="3.6"/><path d="M12.5 13.5 L24 26" stroke="#E8B818" stroke-width="4.2" stroke-linecap="round"/><path d="M18 20 L14.5 23.5 M21.5 24 L18 27.5" stroke="#E8B818" stroke-width="3.4" stroke-linecap="round"/><ellipse cx="8.5" cy="9" rx="6.5" ry="7" fill="none" stroke="#B88A10" stroke-width="0.6"/></svg>
<div class="t" style="left:1389.2px;top:93.2px;font-size:11px;line-height:14px;font-family:'Liberation Sans',sans-serif;font-weight:normal;color:#444;transform:scaleX(0.9654);transform-origin:0 0;">License</div>
<div class="t" style="left:1385.3px;top:106.2px;font-size:11px;line-height:14px;font-family:'Liberation Sans',sans-serif;font-weight:normal;color:#444;transform:scaleX(1.0205);transform-origin:0 0;">manager</div>
<div class="a" style="left:0px;top:144px;width:557px;height:947px;background:#FFFFFF;"></div>
<div class="a" style="left:0px;top:144px;width:557px;height:24px;background:#F0F0F0;"></div>
<svg class="a" style="left:1px;top:149px" width="15" height="14" viewBox="0 0 15 14"><rect x="0.5" y="0.5" width="14" height="13" rx="2" fill="#FFF" stroke="#4A7AD0"/><path d="M3 3 V10 H6 M3 6 H6" stroke="#2A6AD0" stroke-width="1.2" fill="none"/><path d="M7 4h5M7 7h5M7 10h5" stroke="#555" stroke-width="1.4"/></svg>
<svg class="a" style="left:25px;top:149px" width="12" height="14" viewBox="0 0 12 14"><rect x="0.5" y="1" width="11" height="12" rx="1" fill="#D8D8D8" stroke="#B0B0B0"/><path d="M1 4h10M1 7h10M1 10h10" stroke="#F2F2F2"/></svg>
<svg class="a" style="left:46px;top:149px" width="14" height="14" viewBox="0 0 14 14"><path d="M2 7 A5 5 0 0 1 11 4" fill="none" stroke="#2A8AE8" stroke-width="2.2"/><path d="M12 7 A5 5 0 0 1 3 10" fill="none" stroke="#2A8AE8" stroke-width="2.2"/><path d="M9 1 L13 4 L9 6Z M5 8 L1 10 L5 13Z" fill="#2A8AE8"/></svg>
<svg class="a" style="left:68px;top:149px" width="14" height="14" viewBox="0 0 14 14"><path d="M1 4 L7 2 L13 4 L13 11 L7 13 L1 11Z" fill="#E2AE34"/><path d="M1 4 L7 6 L7 13 L1 11Z" fill="#F2C84E"/><path d="M4 2 L7 0.5 L9 2 L7 4Z" fill="#F7DA80"/></svg>
<svg class="a" style="left:89px;top:149px" width="14" height="14" viewBox="0 0 14 14"><rect width="14" height="14" fill="#2ED02E"/><path d="M2 0V14M0 2H14" stroke="#065006" stroke-width="0.9"/><path d="M4 0V14M0 4H14" stroke="#065006" stroke-width="0.9"/><path d="M6 0V14M0 6H14" stroke="#065006" stroke-width="0.9"/><path d="M8 0V14M0 8H14" stroke="#065006" stroke-width="0.9"/><path d="M10 0V14M0 10H14" stroke="#065006" stroke-width="0.9"/><path d="M12 0V14M0 12H14" stroke="#065006" stroke-width="0.9"/><path d="M1 7 Q7 2 13 7 Q7 12 1 7Z" fill="#D8E8E8"/><circle cx="7" cy="7" r="2.8" fill="#6AB0D8"/><circle cx="7" cy="7" r="1" fill="#222"/></svg>
<svg class="a" style="left:111px;top:149px" width="15" height="14" viewBox="0 0 15 14"><path d="M2 12 Q1 5 8 4" fill="none" stroke="#3AB83A" stroke-width="2.2"/><path d="M7 1 L11 4 L7 7Z" fill="#3AB83A"/><path d="M13 3 Q14 9 7 10" fill="none" stroke="#F05A2A" stroke-width="2.2"/><path d="M8 7 L4 10 L8 13Z" fill="#F05A2A"/></svg>
<svg class="a" style="left:134px;top:149px" width="14" height="14" viewBox="0 0 14 14"><circle cx="7" cy="7" r="6.5" fill="#E8C81E" stroke="#B8980A" stroke-width="0.6"/><circle cx="7" cy="7" r="3.5" fill="#F8E888"/><circle cx="7" cy="7" r="1.5" fill="#2A8A8A"/></svg>
<svg class="a" style="left:155px;top:149px" width="14" height="14" viewBox="0 0 14 14"><path d="M2 2 L12 12 M12 2 L2 12" stroke="#E8321E" stroke-width="3" stroke-linecap="round"/></svg>
<svg class="a" style="left:177px;top:149px" width="14" height="14" viewBox="0 0 14 14"><rect x="0.5" y="0.5" width="13" height="13" fill="#CFCFCF" stroke="#BDBDBD"/></svg>
<svg class="a" style="left:199px;top:150px" width="14" height="12" viewBox="0 0 14 12"><rect x="0.5" y="2.5" width="13" height="9" rx="1.5" fill="#9A9AB8" stroke="#6A6A88"/><circle cx="7" cy="7" r="3" fill="#2A2A3A" stroke="#DDD"/><rect x="3" y="0.5" width="4" height="2" fill="#8A8AA0"/></svg>
<svg class="a" style="left:221px;top:149px" width="14" height="14" viewBox="0 0 14 14"><path d="M1 4 L5 1 H13 V10 L9 13 H1Z" fill="#C8C8C8" stroke="#AAA" stroke-width="0.6"/><path d="M1 4 H9 V13 M9 4 L13 1" stroke="#AAA" stroke-width="0.6" fill="none"/></svg>
<svg class="a" style="left:243px;top:149px" width="15" height="14" viewBox="0 0 15 14"><path d="M0.5 4 H6 L7 3 H12 V13 H0.5Z" fill="#F2C84A" stroke="#B89020" stroke-width="0.6"/><path d="M5 11 L12 2 L14 4 L7 12 L4 13Z" fill="#6ACB4A" stroke="#2A8A2A" stroke-width="0.6"/></svg>
<div class="a" style="left:262px;top:146px;width:20px;height:19px;background:#CFCFCF;"></div>
<svg class="a" style="left:264px;top:149px" width="16" height="14" viewBox="0 0 16 14"><path d="M1 2 Q4 5 6 3 Q8 6 10 4 L14 8 L15 12 L10 13 Q6 10 3 8 Q1 5 1 2Z" fill="#F28A2A"/><path d="M6 7 Q9 8 11 7 L13 11 L9 12Z" fill="#FFB84A"/></svg>
<div class="a" style="left:0px;top:167px;width:557px;height:2px;background:#A8A8A8;"></div>
<div class="a" style="left:0px;top:169px;width:557px;height:19px;background:#EFEFEF;"></div>
<div class="a" style="left:0px;top:187px;width:557px;height:2px;background:#A8A8A8;"></div>
<div class="a" style="left:14px;top:171px;width:1px;height:15px;background:#D6D6D6;"></div>
<div class="a" style="left:34px;top:171px;width:1px;height:15px;background:#D6D6D6;"></div>
<div class="a" style="left:124px;top:171px;width:1px;height:15px;background:#D6D6D6;"></div>
<div class="a" style="left:232px;top:171px;width:1px;height:15px;background:#D6D6D6;"></div>
<div class="a" style="left:327px;top:171px;width:1px;height:15px;background:#D6D6D6;"></div>
<div class="a" style="left:420px;top:171px;width:1px;height:15px;background:#D6D6D6;"></div>
<div class="a" style="left:452px;top:171px;width:1px;height:15px;background:#D6D6D6;"></div>
<div class="a" style="left:484px;top:171px;width:1px;height:15px;background:#D6D6D6;"></div>
<div class="a" style="left:516px;top:171px;width:1px;height:15px;background:#D6D6D6;"></div>
<div class="a" style="left:537px;top:171px;width:1px;height:15px;background:#D6D6D6;"></div>
<svg class="a" style="left:0px;top:170px" width="12" height="15" viewBox="0 0 12 15"><path d="M9.00,7.50 L8.88,8.67 L6.99,9.15 L6.59,9.90 L7.24,11.74 L6.33,12.49 L4.65,11.49 L3.84,11.74 L3.00,13.50 L1.83,13.38 L1.35,11.49 L0.60,11.09 L-1.24,11.74 L-1.99,10.83 L-0.99,9.15 L-1.24,8.34 L-3.00,7.50 L-2.88,6.33 L-0.99,5.85 L-0.59,5.10 L-1.24,3.26 L-0.33,2.51 L1.35,3.51 L2.16,3.26 L3.00,1.50 L4.17,1.62 L4.65,3.51 L5.40,3.91 L7.24,3.26 L7.99,4.17 L6.99,5.85 L7.24,6.66 Z" fill="#A8A8A8" stroke="#888" stroke-width="0.6"/><circle cx="3" cy="7.5" r="1.80" fill="#F0F0F0" stroke="#888" stroke-width="0.5"/></svg>
<div class="t" style="left:39.5px;top:170.0px;font-size:11.5px;line-height:14px;font-family:'Liberation Sans',sans-serif;font-weight:normal;color:#111;transform:scaleX(0.9169);transform-origin:0 0;">Job</div>
<div class="t" style="left:130.0px;top:170.0px;font-size:11.5px;line-height:14px;font-family:'Liberation Sans',sans-serif;font-weight:normal;color:#111;transform:scaleX(0.9522);transform-origin:0 0;">Batch</div>
<div class="t" style="left:238.0px;top:170.0px;font-size:11.5px;line-height:14px;font-family:'Liberation Sans',sans-serif;font-weight:normal;color:#111;transform:scaleX(0.8973);transform-origin:0 0;">Modified</div>
<div class="t" style="left:331.5px;top:170.0px;font-size:11.5px;line-height:14px;font-family:'Liberation Sans',sans-serif;font-weight:normal;color:#111;transform:scaleX(0.9044);transform-origin:0 0;">Created</div>
<svg class="a" style="left:312px;top:175px" width="9" height="6" viewBox="0 0 9 6"><path d="M0 0H9L4.5 5.5Z" fill="#333"/></svg>
<svg class="a" style="left:424px;top:170px" width="14" height="15" viewBox="0 0 14 15"><path d="M0.5 0.5H6L8 2.5V10.5H0.5Z" fill="#FFF" stroke="#666"/><path d="M5.5 4.5H11L13 6.5V14.5H5.5Z" fill="#FFF" stroke="#666"/></svg>
<svg class="a" style="left:457px;top:170px" width="12" height="15" viewBox="0 0 12 15"><path d="M0.5 0.5H8L11.5 4V14.5H0.5Z" fill="#FFF" stroke="#666"/><path d="M8 0.5V4H11.5" fill="none" stroke="#666"/></svg>
<svg class="a" style="left:488px;top:170px" width="14" height="14" viewBox="0 0 14 14"><rect width="14" height="14" fill="#E01E28"/><rect x="1" y="1" width="12" height="12" fill="none" stroke="#FFF" stroke-width="0.8"/><path d="M4 4L10 10M10 4L4 10" stroke="#FFF" stroke-width="2.2"/></svg>
<svg class="a" style="left:520px;top:170px" width="14" height="14" viewBox="0 0 14 14"><rect width="14" height="14" fill="#22A022"/><path d="M2 0V14M0 2H14" stroke="#0A5A0A" stroke-width="0.6"/><path d="M4 0V14M0 4H14" stroke="#0A5A0A" stroke-width="0.6"/><path d="M6 0V14M0 6H14" stroke="#0A5A0A" stroke-width="0.6"/><path d="M8 0V14M0 8H14" stroke="#0A5A0A" stroke-width="0.6"/><path d="M10 0V14M0 10H14" stroke="#0A5A0A" stroke-width="0.6"/><path d="M12 0V14M0 12H14" stroke="#0A5A0A" stroke-width="0.6"/><circle cx="7" cy="7" r="4" fill="#9AA8A8"/><circle cx="7" cy="7" r="1.5" fill="#2A6A8A"/></svg>
<svg class="a" style="left:539px;top:170px" width="15" height="15" viewBox="0 0 15 15"><circle cx="7.5" cy="7.5" r="7" fill="#D8D81E" stroke="#8A8A10" stroke-width="0.6"/><circle cx="7.5" cy="7.5" r="3.5" fill="#C8C8C8"/><circle cx="7.5" cy="7.5" r="1.4" fill="#1A8A8A"/></svg>
<div class="a" style="left:0px;top:189px;width:557px;height:18px;background:#FFFFFF;"></div>
<div class="a" style="left:0px;top:206px;width:557px;height:1px;background:#E6E6E6;"></div>
<div class="a" style="left:14px;top:189px;width:1px;height:17px;background:#EBEBEB;"></div>
<div class="a" style="left:34px;top:189px;width:1px;height:17px;background:#EBEBEB;"></div>
<div class="a" style="left:124px;top:189px;width:1px;height:17px;background:#EBEBEB;"></div>
<div class="a" style="left:232px;top:189px;width:1px;height:17px;background:#EBEBEB;"></div>
<div class="a" style="left:327px;top:189px;width:1px;height:17px;background:#EBEBEB;"></div>
<div class="a" style="left:420px;top:189px;width:1px;height:17px;background:#EBEBEB;"></div>
<div class="a" style="left:452px;top:189px;width:1px;height:17px;background:#EBEBEB;"></div>
<div class="a" style="left:484px;top:189px;width:1px;height:17px;background:#EBEBEB;"></div>
<div class="a" style="left:516px;top:189px;width:1px;height:17px;background:#EBEBEB;"></div>
<div class="a" style="left:537px;top:189px;width:1px;height:17px;background:#EBEBEB;"></div>
<div class="t" style="left:40.0px;top:190.0px;font-size:11.5px;line-height:14px;font-family:'Liberation Sans',sans-serif;font-weight:normal;color:#8A8A9A;transform:scaleX(0.9625);transform-origin:0 0;">&lt;all&gt;</div>
<div class="t" style="left:130.0px;top:190.0px;font-size:11.5px;line-height:14px;font-family:'Liberation Sans',sans-serif;font-weight:normal;color:#8A8A9A;transform:scaleX(0.9625);transform-origin:0 0;">&lt;all&gt;</div>
<div class="t" style="left:238.0px;top:190.0px;font-size:11.5px;line-height:14px;font-family:'Liberation Sans',sans-serif;font-weight:normal;color:#8A8A9A;transform:scaleX(0.9625);transform-origin:0 0;">&lt;all&gt;</div>
<div class="t" style="left:331.5px;top:190.0px;font-size:11.5px;line-height:14px;font-family:'Liberation Sans',sans-serif;font-weight:normal;color:#8A8A9A;transform:scaleX(0.9625);transform-origin:0 0;">&lt;all&gt;</div>
<svg class="a" style="left:107px;top:190px" width="15" height="15" viewBox="0 0 15 15"><circle cx="9.5" cy="5.5" r="4.3" fill="none" stroke="#2A5AB0" stroke-width="1.3"/><path d="M6.5 8.5 L1.5 13.5" stroke="#2A5AB0" stroke-width="2.2" stroke-linecap="round"/></svg>
<svg class="a" style="left:215px;top:190px" width="15" height="15" viewBox="0 0 15 15"><circle cx="9.5" cy="5.5" r="4.3" fill="none" stroke="#2A5AB0" stroke-width="1.3"/><path d="M6.5 8.5 L1.5 13.5" stroke="#2A5AB0" stroke-width="2.2" stroke-linecap="round"/></svg>
<svg class="a" style="left:309px;top:190px" width="15" height="15" viewBox="0 0 15 15"><circle cx="9.5" cy="5.5" r="4.3" fill="none" stroke="#2A5AB0" stroke-width="1.3"/><path d="M6.5 8.5 L1.5 13.5" stroke="#2A5AB0" stroke-width="2.2" stroke-linecap="round"/></svg>
<svg class="a" style="left:402px;top:190px" width="15" height="15" viewBox="0 0 15 15"><circle cx="9.5" cy="5.5" r="4.3" fill="none" stroke="#2A5AB0" stroke-width="1.3"/><path d="M6.5 8.5 L1.5 13.5" stroke="#2A5AB0" stroke-width="2.2" stroke-linecap="round"/></svg>
<div class="a" style="left:0px;top:207px;width:557px;height:17px;background:#E3E3E3;"></div>
<div class="a" style="left:14px;top:207px;width:1px;height:17px;background:#F6F6F6;"></div>
<div class="a" style="left:34px;top:207px;width:1px;height:17px;background:#F6F6F6;"></div>
<div class="a" style="left:124px;top:207px;width:1px;height:17px;background:#F6F6F6;"></div>
<div class="a" style="left:232px;top:207px;width:1px;height:17px;background:#F6F6F6;"></div>
<div class="a" style="left:327px;top:207px;width:1px;height:17px;background:#F6F6F6;"></div>
<div class="a" style="left:420px;top:207px;width:1px;height:17px;background:#F6F6F6;"></div>
<div class="a" style="left:452px;top:207px;width:1px;height:17px;background:#F6F6F6;"></div>
<div class="a" style="left:484px;top:207px;width:1px;height:17px;background:#F6F6F6;"></div>
<div class="a" style="left:516px;top:207px;width:1px;height:17px;background:#F6F6F6;"></div>
<div class="a" style="left:537px;top:207px;width:1px;height:17px;background:#F6F6F6;"></div>
<svg class="a" style="left:0px;top:209px" width="14" height="12" viewBox="0 0 14 12"><path d="M0.5 4H6V0.5L13 6L6 11.5V8H0.5Z" fill="#8AE05A" stroke="#3AA02A" stroke-width="0.8"/></svg>
<svg class="a" style="left:19px;top:208px" width="14" height="15" viewBox="0 0 14 15"><path d="M1 4 L7 2 L13 4 L13 12 L7 14 L1 12Z" fill="#E2AE34"/><path d="M1 4 L7 6 L7 14 L1 12Z" fill="#F2C84E"/><path d="M4 2 L7 0.5 L9 2 L7 4Z" fill="#F7DA80"/></svg>
<div class="t" style="left:39.5px;top:209.0px;font-size:11.5px;line-height:14px;font-family:'Liberation Sans',sans-serif;font-weight:normal;color:#333;transform:scaleX(0.8941);transform-origin:0 0;">Demo 1</div>
<div class="t" style="left:128.6px;top:209.0px;font-size:11.5px;line-height:14px;font-family:'Liberation Sans',sans-serif;font-weight:normal;color:#333;transform:scaleX(0.9194);transform-origin:0 0;">BatchName_1</div>
<div class="t" style="left:237.0px;top:209.0px;font-size:11.5px;line-height:14px;font-family:'Liberation Sans',sans-serif;font-weight:normal;color:#333;transform:scaleX(0.9731);transform-origin:0 0;">10/24/2023 2:0...</div>
<div class="t" style="left:331.5px;top:209.0px;font-size:11.5px;line-height:14px;font-family:'Liberation Sans',sans-serif;font-weight:normal;color:#333;transform:scaleX(0.9731);transform-origin:0 0;">10/24/2023 2:0...</div>
<div class="t" style="left:424.0px;top:209.0px;font-size:11.5px;line-height:14px;font-family:'Liberation Sans',sans-serif;font-weight:normal;color:#333;transform:scaleX(0.9382);transform-origin:0 0;">0</div>
<div class="t" style="left:457.0px;top:209.0px;font-size:11.5px;line-height:14px;font-family:'Liberation Sans',sans-serif;font-weight:normal;color:#333;transform:scaleX(0.9382);transform-origin:0 0;">0</div>
<div class="t" style="left:506.0px;top:209.0px;font-size:11.5px;line-height:14px;font-family:'Liberation Sans',sans-serif;font-weight:normal;color:#333;transform:scaleX(0.9382);transform-origin:0 0;">0</div>
<svg class="a" style="left:488px;top:209px" width="15" height="13" viewBox="0 0 15 13"><path d="M1 7 L5 11 L14 2" fill="none" stroke="#2AA02A" stroke-width="3"/></svg>
<div class="a" style="left:0px;top:903px;width:557px;height:188px;background:#FCFCFC;"></div>
<div class="a" style="left:0px;top:903px;width:556px;height:1px;background:#D0D0D0;"></div>
<svg class="a" style="left:3px;top:910px" width="6" height="6" viewBox="0 0 6 6"><path d="M6 0L6 6L0 6Z" fill="#A8A8A8"/></svg>
<div class="t" style="left:18.5px;top:906.3px;font-size:12px;line-height:15px;font-family:'Liberation Sans',sans-serif;font-weight:bold;color:#333;transform:scaleX(0.9413);transform-origin:0 0;">Batch Summary</div>
<div class="a" style="left:0px;top:921px;width:556px;height:1px;background:#D0D0D0;"></div>
<div class="a" style="left:0px;top:938px;width:556px;height:1px;background:#D0D0D0;"></div>
<div class="a" style="left:276px;top:922px;width:1px;height:16px;background:#D0D0D0;"></div>
<div class="t" style="left:18.0px;top:923.3px;font-size:12px;line-height:15px;font-family:'Liberation Sans',sans-serif;font-weight:normal;color:#333;transform:scaleX(0.8720);transform-origin:0 0;">Job</div>
<div class="t" style="left:281.0px;top:923.3px;font-size:12px;line-height:15px;font-family:'Liberation Sans',sans-serif;font-weight:normal;color:#333;transform:scaleX(0.8720);transform-origin:0 0;">Demo 1</div>
<svg class="a" style="left:263px;top:926px" width="10" height="10" viewBox="0 0 10 10"><path d="M0.6 0.6H8.4V5.5L5.5 8.4H0.6Z" fill="#F2F2F2" stroke="#444" stroke-width="1.1"/><path d="M9 6.5 L6.5 9 H9Z" fill="#333"/></svg>
<div class="a" style="left:0px;top:955px;width:556px;height:1px;background:#D0D0D0;"></div>
<div class="a" style="left:276px;top:939px;width:1px;height:16px;background:#D0D0D0;"></div>
<div class="t" style="left:18.0px;top:940.3px;font-size:12px;line-height:15px;font-family:'Liberation Sans',sans-serif;font-weight:normal;color:#333;transform:scaleX(0.8720);transform-origin:0 0;">Batch</div>
<div class="t" style="left:281.0px;top:940.3px;font-size:12px;line-height:15px;font-family:'Liberation Sans',sans-serif;font-weight:normal;color:#333;transform:scaleX(0.8720);transform-origin:0 0;">BatchName_1</div>
<svg class="a" style="left:263px;top:943px" width="10" height="10" viewBox="0 0 10 10"><path d="M0.6 0.6H8.4V5.5L5.5 8.4H0.6Z" fill="#F2F2F2" stroke="#444" stroke-width="1.1"/><path d="M9 6.5 L6.5 9 H9Z" fill="#333"/></svg>
<div class="a" style="left:0px;top:972px;width:556px;height:1px;background:#D0D0D0;"></div>
<div class="a" style="left:276px;top:956px;width:1px;height:16px;background:#D0D0D0;"></div>
<div class="t" style="left:18.0px;top:957.3px;font-size:12px;line-height:15px;font-family:'Liberation Sans',sans-serif;font-weight:normal;color:#333;transform:scaleX(0.8720);transform-origin:0 0;">Created</div>
<div class="t" style="left:281.0px;top:957.3px;font-size:12px;line-height:15px;font-family:'Liberation Sans',sans-serif;font-weight:normal;color:#333;transform:scaleX(0.9350);transform-origin:0 0;">10/24/2023 2:05:44 PM</div>
<svg class="a" style="left:263px;top:960px" width="10" height="10" viewBox="0 0 10 10"><path d="M0.6 0.6H8.4V5.5L5.5 8.4H0.6Z" fill="#F2F2F2" stroke="#444" stroke-width="1.1"/><path d="M9 6.5 L6.5 9 H9Z" fill="#333"/></svg>
<div class="a" style="left:0px;top:989px;width:556px;height:1px;background:#D0D0D0;"></div>
<div class="a" style="left:276px;top:973px;width:1px;height:16px;background:#D0D0D0;"></div>
<div class="t" style="left:18.0px;top:974.3px;font-size:12px;line-height:15px;font-family:'Liberation Sans',sans-serif;font-weight:normal;color:#333;transform:scaleX(0.8720);transform-origin:0 0;">Modified</div>
<div class="t" style="left:281.0px;top:974.3px;font-size:12px;line-height:15px;font-family:'Liberation Sans',sans-serif;font-weight:normal;color:#333;transform:scaleX(0.9350);transform-origin:0 0;">10/24/2023 2:05:44 PM</div>
<svg class="a" style="left:263px;top:977px" width="10" height="10" viewBox="0 0 10 10"><path d="M0.6 0.6H8.4V5.5L5.5 8.4H0.6Z" fill="#F2F2F2" stroke="#444" stroke-width="1.1"/><path d="M9 6.5 L6.5 9 H9Z" fill="#333"/></svg>
<div class="a" style="left:0px;top:1006px;width:556px;height:1px;background:#D0D0D0;"></div>
<div class="a" style="left:276px;top:990px;width:1px;height:16px;background:#D0D0D0;"></div>
<div class="t" style="left:18.0px;top:991.3px;font-size:12px;line-height:15px;font-family:'Liberation Sans',sans-serif;font-weight:normal;color:#333;transform:scaleX(0.8720);transform-origin:0 0;">Documents</div>
<div class="t" style="left:281.0px;top:991.3px;font-size:12px;line-height:15px;font-family:'Liberation Sans',sans-serif;font-weight:normal;color:#333;transform:scaleX(0.8720);transform-origin:0 0;">0</div>
<svg class="a" style="left:263px;top:994px" width="10" height="10" viewBox="0 0 10 10"><path d="M0.6 0.6H8.4V5.5L5.5 8.4H0.6Z" fill="#F2F2F2" stroke="#444" stroke-width="1.1"/><path d="M9 6.5 L6.5 9 H9Z" fill="#333"/></svg>
<div class="a" style="left:0px;top:1023px;width:556px;height:1px;background:#D0D0D0;"></div>
<div class="a" style="left:276px;top:1007px;width:1px;height:16px;background:#D0D0D0;"></div>
<div class="t" style="left:18.0px;top:1008.3px;font-size:12px;line-height:15px;font-family:'Liberation Sans',sans-serif;font-weight:normal;color:#333;transform:scaleX(0.8720);transform-origin:0 0;">Images</div>
<div class="t" style="left:281.0px;top:1008.3px;font-size:12px;line-height:15px;font-family:'Liberation Sans',sans-serif;font-weight:normal;color:#333;transform:scaleX(0.8720);transform-origin:0 0;">0</div>
<svg class="a" style="left:263px;top:1011px" width="10" height="10" viewBox="0 0 10 10"><path d="M0.6 0.6H8.4V5.5L5.5 8.4H0.6Z" fill="#F2F2F2" stroke="#444" stroke-width="1.1"/><path d="M9 6.5 L6.5 9 H9Z" fill="#333"/></svg>
<div class="a" style="left:0px;top:1040px;width:556px;height:1px;background:#D0D0D0;"></div>
<div class="a" style="left:276px;top:1024px;width:1px;height:16px;background:#D0D0D0;"></div>
<div class="t" style="left:18.0px;top:1025.3px;font-size:12px;line-height:15px;font-family:'Liberation Sans',sans-serif;font-weight:normal;color:#333;transform:scaleX(0.8720);transform-origin:0 0;">Errors</div>
<div class="t" style="left:281.0px;top:1025.3px;font-size:12px;line-height:15px;font-family:'Liberation Sans',sans-serif;font-weight:normal;color:#333;transform:scaleX(0.8720);transform-origin:0 0;">0</div>
<svg class="a" style="left:263px;top:1028px" width="10" height="10" viewBox="0 0 10 10"><path d="M0.6 0.6H8.4V5.5L5.5 8.4H0.6Z" fill="#F2F2F2" stroke="#444" stroke-width="1.1"/><path d="M9 6.5 L6.5 9 H9Z" fill="#333"/></svg>
<svg class="a" style="left:5px;top:1045px" width="6" height="9" viewBox="0 0 6 9"><path d="M0.5 0.5L5.5 4.5L0.5 8.5Z" fill="none" stroke="#A8A8A8"/></svg>
<div class="t" style="left:18.5px;top:1042.3px;font-size:12px;line-height:15px;font-family:'Liberation Sans',sans-serif;font-weight:bold;color:#333;transform:scaleX(0.9692);transform-origin:0 0;">Batch Snapshots</div>
<div class="a" style="left:0px;top:1057px;width:556px;height:1px;background:#D0D0D0;"></div>
<div class="a" style="left:276px;top:1058px;width:1px;height:33px;background:#D0D0D0;"></div>
<div class="a" style="left:556px;top:144px;width:1px;height:947px;background:#E0E0E0;"></div>
<div class="a" style="left:557px;top:144px;width:451px;height:947px;background:#EDEDED;"></div>
<div class="a" style="left:557px;top:144px;width:7px;height:947px;background:#E8E8E8;"></div>
<div class="a" style="left:563px;top:144px;width:2px;height:947px;background:#6E6E6E;"></div>
<div class="a" style="left:563px;top:144px;width:445px;height:2px;background:#6E6E6E;"></div>
<div class="a" style="left:565px;top:146px;width:424px;height:945px;background:#C8D5E7;"></div>
<div class="a" style="left:565px;top:154px;width:424px;height:24px;background:#E6D3DD;"></div>
<div class="t" style="left:582.4px;top:152.3px;font-size:12px;line-height:15px;font-family:'Liberation Sans',sans-serif;font-weight:bold;color:#000;transform:scaleX(0.9498);transform-origin:0 0;">Document 1 (1 images) (The</div>
<div class="t" style="left:582.4px;top:167.3px;font-size:12px;line-height:15px;font-family:'Liberation Sans',sans-serif;font-weight:bold;color:#000;transform:scaleX(0.9521);transform-origin:0 0;">field Invoice Number cannot</div>
<svg class="a" style="left:752px;top:155px" width="23" height="19" viewBox="0 0 23 19"><path d="M1 9 Q1 5 5 4 L14 1 Q17 0.5 19 3 L22 9 Q23 12 20 14 L10 18 Q6 19 4 16 Z" fill="#E8C8CE"/><path d="M3 8 Q3 5 6 4.5 L14 2 Q16.5 1.5 18 3.5 L20 8 Q21 10.5 18.5 11.5 L10 14.5 Q7 15.5 5.5 13 Z" fill="#F8E4E8"/><path d="M9 10 L12 5 L15 9 M10.5 8 H14" fill="none" stroke="#6A8AE8" stroke-width="1.3"/></svg>
<svg class="a" style="left:787px;top:156px" width="22" height="22" viewBox="0 0 22 22"><path d="M2 0.5 H12 L17 5.5 V21 H2Z" fill="#EEDFE6" stroke="#B0A0A8" stroke-width="0.8"/><path d="M12 0.5 V5.5 H17" fill="none" stroke="#B0A0A8" stroke-width="0.8"/><path d="M5 9 V14 H1.5 L6.5 20 L11.5 14 H8 V9Z" fill="#A8D88A" stroke="#5A9A3A" stroke-width="0.8"/><path d="M16 12 V21 M11.5 16.5 H20.5" stroke="#5A9A3A" stroke-width="4.2"/><path d="M16 12.5 V20.5 M12 16.5 H20" stroke="#A8D88A" stroke-width="2.2"/></svg>
<svg class="a" style="left:819px;top:155px" width="24" height="23" viewBox="0 0 24 23"><g transform="translate(3,1)"><path d="M2 0.5 H12 L17 5.5 V21 H2Z" fill="#EEDFE6" stroke="#B0A0A8" stroke-width="0.8"/><path d="M12 0.5 V5.5 H17" fill="none" stroke="#B0A0A8" stroke-width="0.8"/></g><path d="M6 12 V7 H1.5 L6.5 1 L11.5 7 H9 V12Z" fill="#A8D88A" stroke="#5A9A3A" stroke-width="0.8"/><path d="M17 13 V21 M12.5 17.5 H21.5" stroke="#5A9A3A" stroke-width="4.2"/><path d="M17 13.5 V20.5 M13 17.5 H21" stroke="#A8D88A" stroke-width="2.2"/></svg>
<svg class="a" style="left:855px;top:156px" width="20" height="20" viewBox="0 0 20 20"><path d="M6 1 H14 V9 H19 L10 19 L1 9 H6Z" fill="#A8D88A" stroke="#6AA84A" stroke-width="0.8"/></svg>
<svg class="a" style="left:889px;top:156px" width="20" height="20" viewBox="0 0 20 20"><path d="M6 19 H14 V11 H19 L10 1 L1 11 H6Z" fill="#A8D88A" stroke="#6AA84A" stroke-width="0.8"/></svg>
<svg class="a" style="left:921px;top:156px" width="22" height="22" viewBox="0 0 22 22"><g transform="translate(3,0)"><path d="M2 0.5 H12 L17 5.5 V21 H2Z" fill="#EEDFE6" stroke="#B0A0A8" stroke-width="0.8"/><path d="M12 0.5 V5.5 H17" fill="none" stroke="#B0A0A8" stroke-width="0.8"/></g><path d="M2 14 L9 21 M9 14 L2 21" stroke="#F07A6A" stroke-width="2.6"/></svg>
<svg class="a" style="left:956px;top:157px" width="22" height="19" viewBox="0 0 22 19"><path d="M1 9 Q11 0 21 9 Q11 18 1 9Z" fill="#F0DDE5" stroke="#C8AAB4" stroke-width="0.8"/><circle cx="11" cy="9" r="4" fill="#8AA8E0"/><circle cx="11" cy="9" r="1.6" fill="#6A6A8A"/><path d="M2 1 L20 18" stroke="#F08A5A" stroke-width="1.6"/></svg>
<div class="a" style="left:565px;top:189px;width:256px;height:40px;background:#E2E8F2;"></div>
<div class="a" style="left:602px;top:192px;width:182px;height:40px;background:#00E000;"></div>
<div class="a" style="left:605px;top:195px;width:176px;height:40px;background:#E7EAE5;"></div>
<div class="a" style="left:615px;top:207px;width:48px;height:1px;background:#555;opacity:0.7;"></div>
<div class="a" style="left:615px;top:211px;width:20px;height:1px;background:#999;opacity:0.7;"></div>
<div class="a" style="left:615px;top:215px;width:34px;height:1px;background:#999;opacity:0.7;"></div>
<div class="a" style="left:615px;top:219px;width:34px;height:1px;background:#999;opacity:0.7;"></div>
<div class="a" style="left:989px;top:146px;width:17px;height:945px;background:#F0F0F0;"></div>
<svg class="a" style="left:993px;top:152px" width="10" height="7" viewBox="0 0 10 7"><path d="M1 6 L5 2 L9 6" fill="none" stroke="#606060" stroke-width="1.6"/></svg>
<div class="a" style="left:990px;top:163px;width:15px;height:17px;background:#CDCDCD;"></div>
<div class="a" style="left:1006px;top:144px;width:2px;height:947px;background:#D8D8D8;"></div>
<div class="a" style="left:565px;top:900px;width:256px;height:143px;background:#E2E8F2;"></div>
<div class="a" style="left:610px;top:900px;width:165px;height:124px;background:#FFFFFF;border:1px solid #8A8A8A;border-top:none;"></div>
<div class="a" style="left:611px;top:900px;width:163px;height:30px;background:linear-gradient(#D8D8D8,#FFFFFF);"></div>
<div class="a" style="left:700px;top:909px;width:57px;height:16px;border:1px solid #555;border-top:none;"></div>
<div class="a" style="left:737px;top:909px;width:1px;height:16px;background:#555;"></div>
<div class="a" style="left:700px;top:917px;width:57px;height:1px;background:#555;"></div>
<div class="a" style="left:625px;top:928px;width:24px;height:1px;background:#888;opacity:0.55;"></div>
<div class="a" style="left:625px;top:934px;width:40px;height:1px;background:#444;opacity:0.55;"></div>
<div class="a" style="left:611px;top:936px;width:163px;height:1px;background:#CCC;opacity:0.55;"></div>
<div class="a" style="left:625px;top:941px;width:75px;height:1px;background:#999;opacity:0.55;"></div>
<div class="a" style="left:625px;top:943px;width:20px;height:1px;background:#999;opacity:0.55;"></div>
<div class="a" style="left:630px;top:948px;width:45px;height:1px;background:#999;opacity:0.55;"></div>
<div class="a" style="left:630px;top:952px;width:25px;height:1px;background:#999;opacity:0.55;"></div>
<div class="a" style="left:630px;top:956px;width:40px;height:1px;background:#999;opacity:0.55;"></div>
<div class="a" style="left:625px;top:962px;width:55px;height:1px;background:#999;opacity:0.55;"></div>
<div class="a" style="left:630px;top:966px;width:45px;height:1px;background:#999;opacity:0.55;"></div>
<div class="a" style="left:625px;top:972px;width:70px;height:1px;background:#999;opacity:0.55;"></div>
<div class="a" style="left:630px;top:976px;width:25px;height:1px;background:#999;opacity:0.55;"></div>
<div class="t" style="left:663.8px;top:1027.3px;font-size:12px;line-height:15px;font-family:'Liberation Sans',sans-serif;font-weight:bold;color:#000;transform:scaleX(0.9154);transform-origin:0 0;">Page 1 of 1</div>
<div class="a" style="left:565px;top:1051px;width:424px;height:24px;background:#E6D3DD;"></div>
<div class="t" style="left:582.4px;top:1049.3px;font-size:12px;line-height:15px;font-family:'Liberation Sans',sans-serif;font-weight:bold;color:#000;transform:scaleX(0.9498);transform-origin:0 0;">Document 4 (1 images) (The</div>
<div class="t" style="left:582.4px;top:1064.3px;font-size:12px;line-height:15px;font-family:'Liberation Sans',sans-serif;font-weight:bold;color:#000;transform:scaleX(0.9521);transform-origin:0 0;">field Invoice Number cannot</div>
<svg class="a" style="left:752px;top:1052px" width="23" height="19" viewBox="0 0 23 19"><path d="M1 9 Q1 5 5 4 L14 1 Q17 0.5 19 3 L22 9 Q23 12 20 14 L10 18 Q6 19 4 16 Z" fill="#E8C8CE"/><path d="M3 8 Q3 5 6 4.5 L14 2 Q16.5 1.5 18 3.5 L20 8 Q21 10.5 18.5 11.5 L10 14.5 Q7 15.5 5.5 13 Z" fill="#F8E4E8"/><path d="M9 10 L12 5 L15 9 M10.5 8 H14" fill="none" stroke="#6A8AE8" stroke-width="1.3"/></svg>
<svg class="a" style="left:787px;top:1053px" width="22" height="22" viewBox="0 0 22 22"><path d="M2 0.5 H12 L17 5.5 V21 H2Z" fill="#EEDFE6" stroke="#B0A0A8" stroke-width="0.8"/><path d="M12 0.5 V5.5 H17" fill="none" stroke="#B0A0A8" stroke-width="0.8"/><path d="M5 9 V14 H1.5 L6.5 20 L11.5 14 H8 V9Z" fill="#A8D88A" stroke="#5A9A3A" stroke-width="0.8"/><path d="M16 12 V21 M11.5 16.5 H20.5" stroke="#5A9A3A" stroke-width="4.2"/><path d="M16 12.5 V20.5 M12 16.5 H20" stroke="#A8D88A" stroke-width="2.2"/></svg>
<svg class="a" style="left:819px;top:1052px" width="24" height="23" viewBox="0 0 24 23"><g transform="translate(3,1)"><path d="M2 0.5 H12 L17 5.5 V21 H2Z" fill="#EEDFE6" stroke="#B0A0A8" stroke-width="0.8"/><path d="M12 0.5 V5.5 H17" fill="none" stroke="#B0A0A8" stroke-width="0.8"/></g><path d="M6 12 V7 H1.5 L6.5 1 L11.5 7 H9 V12Z" fill="#A8D88A" stroke="#5A9A3A" stroke-width="0.8"/><path d="M17 13 V21 M12.5 17.5 H21.5" stroke="#5A9A3A" stroke-width="4.2"/><path d="M17 13.5 V20.5 M13 17.5 H21" stroke="#A8D88A" stroke-width="2.2"/></svg>
<svg class="a" style="left:855px;top:1053px" width="20" height="20" viewBox="0 0 20 20"><path d="M6 1 H14 V9 H19 L10 19 L1 9 H6Z" fill="#A8D88A" stroke="#6AA84A" stroke-width="0.8"/></svg>
<svg class="a" style="left:889px;top:1053px" width="20" height="20" viewBox="0 0 20 20"><path d="M6 19 H14 V11 H19 L10 1 L1 11 H6Z" fill="#A8D88A" stroke="#6AA84A" stroke-width="0.8"/></svg>
<svg class="a" style="left:921px;top:1053px" width="22" height="22" viewBox="0 0 22 22"><g transform="translate(3,0)"><path d="M2 0.5 H12 L17 5.5 V21 H2Z" fill="#EEDFE6" stroke="#B0A0A8" stroke-width="0.8"/><path d="M12 0.5 V5.5 H17" fill="none" stroke="#B0A0A8" stroke-width="0.8"/></g><path d="M2 14 L9 21 M9 14 L2 21" stroke="#F07A6A" stroke-width="2.6"/></svg>
<svg class="a" style="left:956px;top:1054px" width="22" height="19" viewBox="0 0 22 19"><path d="M1 9 Q11 0 21 9 Q11 18 1 9Z" fill="#F0DDE5" stroke="#C8AAB4" stroke-width="0.8"/><circle cx="11" cy="9" r="4" fill="#8AA8E0"/><circle cx="11" cy="9" r="1.6" fill="#6A6A8A"/><path d="M2 1 L20 18" stroke="#F08A5A" stroke-width="1.6"/></svg>
<div class="a" style="left:565px;top:1085px;width:256px;height:6px;background:#E2E8F2;"></div>
<div class="a" style="left:610px;top:1090px;width:165px;height:1px;background:#8A8A8A;"></div>
<div class="a" style="left:1008px;top:144px;width:539px;height:947px;background:#E9E9E9;"></div>
<div class="a" style="left:1008px;top:144px;width:1px;height:947px;background:#C8C8C8;"></div>
<div class="t" style="left:1018.6px;top:150.8px;font-size:18px;line-height:22px;font-family:'Liberation Sans',sans-serif;font-weight:normal;color:#3A3A48;transform:scaleX(1.0121);transform-origin:0 0;">Form</div>
<div class="a" style="left:1014px;top:178px;width:533px;height:25px;background:#EFEFEF;"></div>
<svg class="a" style="left:1018px;top:181px" width="17" height="18" viewBox="0 0 17 18"><circle cx="4" cy="4" r="3.2" fill="#F5A81E" stroke="#E85A1A" stroke-width="0.8"/><rect x="2.5" y="9.5" width="13" height="6" fill="#FFF" stroke="#1A3AA8" stroke-width="1.4"/><path d="M6 7 V17 M4 17 H8" stroke="#333" stroke-width="0.8"/></svg>
<svg class="a" style="left:1042px;top:181px" width="17" height="18" viewBox="0 0 17 18"><circle cx="4" cy="4" r="3.2" fill="#F5A81E" stroke="#E85A1A" stroke-width="0.8"/><rect x="2.5" y="9.5" width="13" height="6" fill="#FFF" stroke="#1A3AA8" stroke-width="1.4"/><path d="M6 7 V17 M4 17 H8" stroke="#333" stroke-width="0.8"/><path d="M11 2 V13 H16" fill="none" stroke="#111" stroke-width="2.4"/><path d="M8 6 H14" stroke="#111" stroke-width="2"/></svg>
<svg class="a" style="left:1067px;top:181px" width="16" height="18" viewBox="0 0 16 18"><rect x="1.5" y="9.5" width="12" height="6" fill="#F4F4F4" stroke="#BBB" stroke-width="1.2"/><path d="M8 2 L13 7 M13 2 L8 7" stroke="#BBB" stroke-width="1.6"/></svg>
<svg class="a" style="left:1086px;top:182px" width="14" height="15" viewBox="0 0 14 15"><path d="M4 14 V7 H1 L7 1 L13 7 H10 V14Z" fill="#D8D8D8" stroke="#BBB" stroke-width="0.8"/></svg>
<svg class="a" style="left:1108px;top:182px" width="14" height="15" viewBox="0 0 14 15"><path d="M4 1 V8 H1 L7 14 L13 8 H10 V1Z" fill="#D8D8D8" stroke="#BBB" stroke-width="0.8"/></svg>
<svg class="a" style="left:1130px;top:182px" width="16" height="16" viewBox="0 0 16 16"><rect x="1" y="1" width="10" height="14" fill="#8A8AD8" stroke="#4A4A9A" stroke-width="0.8"/><path d="M1 4h10M1 7h10M1 10h10M1 13h10" stroke="#C8C8F0" stroke-width="0.8"/><rect x="11" y="2" width="4" height="12" fill="#DDD" stroke="#777" stroke-width="0.6"/></svg>
<div class="a" style="left:1153px;top:183px;width:1px;height:16px;background:#D0D0D0;"></div>
<div class="a" style="left:1205px;top:183px;width:1px;height:16px;background:#D0D0D0;"></div>
<div class="a" style="left:1279px;top:183px;width:1px;height:16px;background:#D0D0D0;"></div>
<div class="a" style="left:1330px;top:183px;width:1px;height:16px;background:#D0D0D0;"></div>
<div class="a" style="left:1157px;top:180px;width:20px;height:21px;background:#D4D4D4;"></div>
<svg class="a" style="left:1159px;top:183px" width="16" height="14" viewBox="0 0 16 14"><rect x="7" y="3" width="8" height="7" fill="#2A6AD8"/><circle cx="6" cy="6" r="4.5" fill="#BFE0F5" stroke="#5A8AC0" stroke-width="1"/><path d="M9 9 L13 13" stroke="#E8802A" stroke-width="2"/></svg>
<svg class="a" style="left:1181px;top:182px" width="16" height="16" viewBox="0 0 16 16"><rect x="1" y="5" width="12" height="10" fill="#F4F4F4" stroke="#AAA" stroke-width="0.8"/><path d="M4 5 L9 1 H15 V8 L13 10" fill="#E0E0E0" stroke="#AAA" stroke-width="0.8"/><path d="M3 8h8M3 11h8" stroke="#BBB"/></svg>
<svg class="a" style="left:1212px;top:183px" width="15" height="15" viewBox="0 0 15 15"><rect width="15" height="15" fill="#22A022"/><path d="M2 0V15M0 2H15" stroke="#0A5A0A" stroke-width="0.6"/><path d="M4 0V15M0 4H15" stroke="#0A5A0A" stroke-width="0.6"/><path d="M6 0V15M0 6H15" stroke="#0A5A0A" stroke-width="0.6"/><path d="M8 0V15M0 8H15" stroke="#0A5A0A" stroke-width="0.6"/><path d="M10 0V15M0 10H15" stroke="#0A5A0A" stroke-width="0.6"/><path d="M12 0V15M0 12H15" stroke="#0A5A0A" stroke-width="0.6"/><path d="M14 0V15M0 14H15" stroke="#0A5A0A" stroke-width="0.6"/><path d="M1 7.5 Q7.5 2 14 7.5 Q7.5 13 1 7.5Z" fill="#EEE"/><circle cx="7.5" cy="7.5" r="2.8" fill="#3A8AD8"/><circle cx="7.5" cy="7.5" r="1.1" fill="#222"/></svg>
<div class="a" style="left:1231px;top:180px;width:20px;height:21px;background:#D4D4D4;"></div>
<svg class="a" style="left:1233px;top:184px" width="16" height="12" viewBox="0 0 16 12"><path d="M1 6 Q8 -1 15 6 Q8 13 1 6Z" fill="#F4F4F4" stroke="#777" stroke-width="0.8"/><circle cx="8" cy="6" r="3.4" fill="#3A8AD8"/><circle cx="8" cy="6" r="1.3" fill="#222"/></svg>
<svg class="a" style="left:1256px;top:182px" width="15" height="16" viewBox="0 0 15 16"><path d="M2 13 Q1 5 8 4" fill="none" stroke="#3AB83A" stroke-width="2.2"/><path d="M7 1 L11 4 L7 7Z" fill="#3AB83A"/><path d="M13 3 Q14 10 7 11" fill="none" stroke="#F05A2A" stroke-width="2.2"/><path d="M8 8 L4 11 L8 14Z" fill="#F05A2A"/></svg>
<svg class="a" style="left:1286px;top:182px" width="16" height="17" viewBox="0 0 16 17"><path d="M1 14 L7 1 H10 L12 14" fill="none" stroke="#4A7AD8" stroke-width="2.2"/><path d="M3 9 H11" stroke="#4A7AD8" stroke-width="1.6"/><circle cx="12" cy="12.5" r="3.8" fill="#F07A2A"/><path d="M10 12.5h4" stroke="#FFF" stroke-width="1.4"/></svg>
<svg class="a" style="left:1308px;top:182px" width="16" height="17" viewBox="0 0 16 17"><path d="M1 14 L7 1 H10 L12 14" fill="none" stroke="#4A7AD8" stroke-width="2.2"/><path d="M3 9 H11" stroke="#4A7AD8" stroke-width="1.6"/><circle cx="12" cy="12.5" r="3.8" fill="#3AA83A"/><path d="M10 12.5h4M12 10.5v4" stroke="#FFF" stroke-width="1.4"/></svg>
<svg class="a" style="left:1338px;top:182px" width="15" height="17" viewBox="0 0 15 17"><rect x="1" y="1" width="10" height="14" fill="#F0F0F0" stroke="#888" stroke-width="0.8"/><path d="M3 4 L6 7 L3 10" fill="none" stroke="#555"/><rect x="8" y="10" width="6" height="6" fill="#3A6AC8"/></svg>
<div class="a" style="left:1015px;top:203px;width:532px;height:1px;background:#FFFFFF;"></div>
<div class="a" style="left:1015px;top:204px;width:532px;height:18px;background:linear-gradient(#F6F6F6,#E8E8E8);"></div>
<svg class="a" style="left:1022px;top:210px" width="6" height="6" viewBox="0 0 6 6"><path d="M6 0L6 6L0 6Z" fill="#A8A8A8"/></svg>
<div class="t" style="left:1036.0px;top:206.5px;font-size:10px;line-height:12px;font-family:'Liberation Mono',monospace;font-weight:bold;color:#333;">Document Fields</div>
<div class="a" style="left:1473px;top:222px;width:74px;height:30px;background:#F4F4F4;"></div>
<div class="a" style="left:1473px;top:252px;width:74px;height:16px;background:#E8C8CA;"></div>
<div class="a" style="left:1473px;top:268px;width:74px;height:64px;background:#F4F4F4;"></div>
<div class="a" style="left:1473px;top:332px;width:74px;height:16px;background:#E8C8CA;"></div>
<div class="a" style="left:1473px;top:348px;width:74px;height:208px;background:#FAFAFA;"></div>
<div class="a" style="left:1473px;top:556px;width:74px;height:1px;background:#8AAAD8;"></div>
<div class="a" style="left:1473px;top:557px;width:74px;height:100px;background:linear-gradient(#D8E8FB,#C0DCF8);"></div>
<div class="a" style="left:1473px;top:657px;width:74px;height:23px;background:#E8E8E8;"></div>
<div class="a" style="left:1473px;top:680px;width:74px;height:6px;background:#CBCBCB;"></div>
<div class="a" style="left:1473px;top:686px;width:74px;height:37px;background:#E5E5E5;"></div>
<div class="a" style="left:1473px;top:723px;width:74px;height:1px;background:#D8D8D8;"></div>
<div class="a" style="left:1473px;top:724px;width:74px;height:21px;background:#FCFCFC;"></div>
<div class="a" style="left:1473px;top:745px;width:74px;height:1px;background:#D0D0D0;"></div>
<div class="a" style="left:1473px;top:746px;width:74px;height:4px;background:#F0F0F0;"></div>
<div class="a" style="left:1473px;top:750px;width:74px;height:162px;background:#FCFCFC;"></div>
<div class="a" style="left:1012px;top:912px;width:535px;height:179px;background:#FCFCFC;"></div>
<div class="a" style="left:1008px;top:144px;width:7px;height:947px;background:linear-gradient(90deg,#CFCFCF,#EDEDED);"></div>
<div class="a" style="left:1473px;top:767px;width:74px;height:1px;background:#D0D0D0;"></div>
<div class="a" style="left:1473px;top:784px;width:74px;height:1px;background:#D0D0D0;"></div>
<div class="a" style="left:1473px;top:801px;width:74px;height:1px;background:#D0D0D0;"></div>
<div class="a" style="left:1473px;top:818px;width:74px;height:1px;background:#D0D0D0;"></div>
<div class="a" style="left:1473px;top:835px;width:74px;height:1px;background:#D0D0D0;"></div>
<div class="a" style="left:1473px;top:852px;width:74px;height:1px;background:#D0D0D0;"></div>
<div class="a" style="left:1473px;top:869px;width:74px;height:1px;background:#D0D0D0;"></div>
<div class="a" style="left:1473px;top:886px;width:74px;height:1px;background:#D0D0D0;"></div>
<div class="a" style="left:1015px;top:903px;width:532px;height:1px;background:#D0D0D0;"></div>
<div class="a" style="left:1015px;top:920px;width:532px;height:1px;background:#D0D0D0;"></div>
<div class="a" style="left:1015px;top:937px;width:532px;height:1px;background:#D0D0D0;"></div>
<div class="a" style="left:1015px;top:954px;width:532px;height:1px;background:#D0D0D0;"></div>
<div class="a" style="left:1015px;top:971px;width:532px;height:1px;background:#D0D0D0;"></div>
<div class="a" style="left:1015px;top:988px;width:532px;height:1px;background:#D0D0D0;"></div>
<div class="a" style="left:1015px;top:1005px;width:532px;height:1px;background:#D0D0D0;"></div>
<div class="a" style="left:1015px;top:1022px;width:532px;height:1px;background:#D0D0D0;"></div>
<div class="a" style="left:1015px;top:1039px;width:532px;height:1px;background:#D0D0D0;"></div>
<div class="a" style="left:1015px;top:1056px;width:532px;height:1px;background:#D0D0D0;"></div>
<div class="a" style="left:1015px;top:1073px;width:532px;height:1px;background:#D0D0D0;"></div>
<div class="a" style="left:1015px;top:1090px;width:532px;height:1px;background:#D0D0D0;"></div>
<div class="t" style="left:1034.8px;top:905.3px;font-size:12px;line-height:15px;font-family:'Liberation Sans',sans-serif;font-weight:normal;color:#333;transform:scaleX(0.8900);transform-origin:0 0;">sys_jobcfgxml_version</div>
<div class="t" style="left:1034.8px;top:922.3px;font-size:12px;line-height:15px;font-family:'Liberation Sans',sans-serif;font-weight:normal;color:#333;transform:scaleX(0.8900);transform-origin:0 0;">sysval_Document type</div>
<div class="t" style="left:1034.8px;top:939.3px;font-size:12px;line-height:15px;font-family:'Liberation Sans',sans-serif;font-weight:normal;color:#333;transform:scaleX(0.8900);transform-origin:0 0;">sysval_Invoice Date</div>
<div class="t" style="left:1034.8px;top:956.3px;font-size:12px;line-height:15px;font-family:'Liberation Sans',sans-serif;font-weight:normal;color:#333;transform:scaleX(0.8900);transform-origin:0 0;">sysval_Invoice Number</div>
<div class="t" style="left:1034.8px;top:973.3px;font-size:12px;line-height:15px;font-family:'Liberation Sans',sans-serif;font-weight:normal;color:#333;transform:scaleX(0.8900);transform-origin:0 0;">sysval_Invoice Total</div>
<div class="t" style="left:1034.8px;top:990.3px;font-size:12px;line-height:15px;font-family:'Liberation Sans',sans-serif;font-weight:normal;color:#333;transform:scaleX(0.8900);transform-origin:0 0;">sysval_Net Total</div>
<div class="t" style="left:1034.8px;top:1007.3px;font-size:12px;line-height:15px;font-family:'Liberation Sans',sans-serif;font-weight:normal;color:#333;transform:scaleX(0.8900);transform-origin:0 0;">sysval_Order number</div>
<div class="t" style="left:1034.8px;top:1024.3px;font-size:12px;line-height:15px;font-family:'Liberation Sans',sans-serif;font-weight:normal;color:#333;transform:scaleX(0.8900);transform-origin:0 0;">sysval_Supplier</div>
<div class="t" style="left:1034.8px;top:1041.3px;font-size:12px;line-height:15px;font-family:'Liberation Sans',sans-serif;font-weight:normal;color:#333;transform:scaleX(0.8900);transform-origin:0 0;">sysval_Tax Total</div>
<div class="t" style="left:1034.8px;top:1058.3px;font-size:12px;line-height:15px;font-family:'Liberation Sans',sans-serif;font-weight:normal;color:#333;transform:scaleX(0.8900);transform-origin:0 0;">sysval_aut_Invoice Total</div>
<div class="t" style="left:1034.8px;top:1075.3px;font-size:12px;line-height:15px;font-family:'Liberation Sans',sans-serif;font-weight:normal;color:#333;transform:scaleX(0.8900);transform-origin:0 0;">sysval_fun_Invoice Number</div>
<div class="a" style="left:473px;top:221px;width:1000px;height:692px;background:#F0F0F0;border:1px solid #6A6A6A;box-shadow:0 0 14px 2px rgba(0,0,0,0.28)"></div>
<div class="a" style="left:474px;top:222px;width:998px;height:30px;background:#FFFFFF;"></div>
<div class="t" style="left:482.0px;top:230.3px;font-size:12px;line-height:15px;font-family:'Liberation Sans',sans-serif;font-weight:normal;color:#000;transform:scaleX(0.9591);transform-origin:0 0;">Google Vision OCR Settings</div>
<svg class="a" style="left:1450px;top:229px" width="14" height="14"><path d="M2 2L12 12M12 2L2 12" stroke="#111" stroke-width="1.2"/></svg>
<div class="a" style="left:483px;top:263px;width:977px;height:532px;background:#F0F0F0;border:1px solid #D9D9D9;"></div>
<div class="a" style="left:485px;top:265px;width:973px;height:21px;background:#F0F0F0;border-top:1px solid #C8C8C8;border-bottom:1px solid #C0C0C0;"></div>
<div class="a" style="left:972px;top:267px;width:2px;height:18px;background:#D0D0D0;"></div>
<div class="t" style="left:489.0px;top:269.0px;font-size:11.5px;line-height:14px;font-family:'Liberation Sans',sans-serif;font-weight:normal;color:#222;transform:scaleX(0.8974);transform-origin:0 0;">Property</div>
<div class="t" style="left:977.0px;top:269.0px;font-size:11.5px;line-height:14px;font-family:'Liberation Sans',sans-serif;font-weight:normal;color:#222;transform:scaleX(0.9104);transform-origin:0 0;">Value</div>
<div class="a" style="left:485px;top:286px;width:956px;height:448px;background:#EFEFEF;"></div>
<div class="a" style="left:485px;top:286px;width:956px;height:448px;overflow:hidden">
<svg class="a" style="left:6px;top:5px" width="6" height="6"><path d="M6 0L6 6L0 6Z" fill="#A8A8A8"/></svg>
<div class="t" style="left:21.0px;top:1.3px;font-size:12px;line-height:15px;font-family:'Liberation Sans',sans-serif;font-weight:bold;color:#333;">Service account configuration</div>
<div class="a" style="left:17px;top:17px;width:469px;height:16px;background:#FCFCFC;"></div>
<div class="a" style="left:487px;top:17px;width:469px;height:16px;background:#FCFCFC;"></div>
<div class="t" style="left:21.0px;top:18.3px;font-size:12px;line-height:15px;font-family:'Liberation Sans',sans-serif;font-weight:normal;color:#333;transform:scaleX(0.8720);transform-origin:0 0;">Service account</div>
<div class="t" style="left:491.0px;top:18.3px;font-size:12px;line-height:15px;font-family:'Liberation Sans',sans-serif;font-weight:normal;color:#333;transform:scaleX(0.8720);transform-origin:0 0;">ChronoScan integrated service (Requires credits)</div>
<svg class="a" style="left:6px;top:39px" width="6" height="6"><path d="M6 0L6 6L0 6Z" fill="#A8A8A8"/></svg>
<div class="t" style="left:21.0px;top:35.3px;font-size:12px;line-height:15px;font-family:'Liberation Sans',sans-serif;font-weight:bold;color:#333;">Google Document AI</div>
<div class="a" style="left:17px;top:51px;width:469px;height:16px;background:#CCCCCC;"></div>
<div class="a" style="left:487px;top:51px;width:469px;height:16px;background:#FCFCFC;"></div>
<div class="t" style="left:21.0px;top:52.3px;font-size:12px;line-height:15px;font-family:'Liberation Sans',sans-serif;font-weight:normal;color:#333;transform:scaleX(0.8720);transform-origin:0 0;">Enable Google Document AI processing option</div>
<div class="t" style="left:492.0px;top:49.7px;font-size:12.5px;line-height:16px;font-family:'Liberation Sans',sans-serif;font-weight:bold;color:#222;transform:scaleX(0.9500);transform-origin:0 0;">True</div>
<div class="a" style="left:939px;top:51px;width:16px;height:15px;background:#E8E8E8;border:1px solid #C4C4C4;"></div>
<svg class="a" style="left:943px;top:56px" width="8" height="5"><path d="M1 1L7 1L4 4Z" fill="#666"/></svg>
<svg class="a" style="left:6px;top:73px" width="6" height="6"><path d="M6 0L6 6L0 6Z" fill="#A8A8A8"/></svg>
<div class="t" style="left:21.0px;top:69.3px;font-size:12px;line-height:15px;font-family:'Liberation Sans',sans-serif;font-weight:bold;color:#333;">OCR Settings</div>
<div class="a" style="left:17px;top:85px;width:469px;height:16px;background:#FCFCFC;"></div>
<div class="a" style="left:487px;top:85px;width:469px;height:16px;background:#FCFCFC;"></div>
<div class="t" style="left:21.0px;top:86.3px;font-size:12px;line-height:15px;font-family:'Liberation Sans',sans-serif;font-weight:normal;color:#333;transform:scaleX(0.8720);transform-origin:0 0;">Endpoint</div>
<div class="t" style="left:491.0px;top:86.3px;font-size:12px;line-height:15px;font-family:'Liberation Sans',sans-serif;font-weight:normal;color:#333;transform:scaleX(0.8720);transform-origin:0 0;">EU</div>
<div class="a" style="left:17px;top:102px;width:469px;height:16px;background:#FCFCFC;"></div>
<div class="a" style="left:487px;top:102px;width:469px;height:16px;background:#FCFCFC;"></div>
<div class="t" style="left:21.0px;top:103.3px;font-size:12px;line-height:15px;font-family:'Liberation Sans',sans-serif;font-weight:normal;color:#333;transform:scaleX(0.8720);transform-origin:0 0;">Compression level</div>
<div class="t" style="left:491.0px;top:103.3px;font-size:12px;line-height:15px;font-family:'Liberation Sans',sans-serif;font-weight:normal;color:#333;transform:scaleX(0.8720);transform-origin:0 0;">Auto</div>
<div class="a" style="left:17px;top:119px;width:469px;height:16px;background:#FCFCFC;"></div>
<div class="a" style="left:487px;top:119px;width:469px;height:16px;background:#FCFCFC;"></div>
<div class="t" style="left:21.0px;top:120.3px;font-size:12px;line-height:15px;font-family:'Liberation Sans',sans-serif;font-weight:normal;color:#333;transform:scaleX(0.8720);transform-origin:0 0;">Deskew image</div>
<div class="t" style="left:491.0px;top:120.3px;font-size:12px;line-height:15px;font-family:'Liberation Sans',sans-serif;font-weight:normal;color:#333;transform:scaleX(0.8720);transform-origin:0 0;">True</div>
<div class="a" style="left:17px;top:136px;width:469px;height:16px;background:#FCFCFC;"></div>
<div class="a" style="left:487px;top:136px;width:469px;height:16px;background:#FCFCFC;"></div>
<div class="t" style="left:21.0px;top:137.3px;font-size:12px;line-height:15px;font-family:'Liberation Sans',sans-serif;font-weight:normal;color:#333;transform:scaleX(0.8720);transform-origin:0 0;">Fallback OCR</div>
<div class="t" style="left:491.0px;top:137.3px;font-size:12px;line-height:15px;font-family:'Liberation Sans',sans-serif;font-weight:normal;color:#333;transform:scaleX(0.8720);transform-origin:0 0;">No</div>
<div class="a" style="left:17px;top:153px;width:469px;height:16px;background:#FCFCFC;"></div>
<div class="a" style="left:487px;top:153px;width:469px;height:16px;background:#FCFCFC;"></div>
<div class="t" style="left:21.0px;top:154.3px;font-size:12px;line-height:15px;font-family:'Liberation Sans',sans-serif;font-weight:normal;color:#333;transform:scaleX(0.8720);transform-origin:0 0;">Allow analytics and image storage</div>
<div class="t" style="left:491.0px;top:154.3px;font-size:12px;line-height:15px;font-family:'Liberation Sans',sans-serif;font-weight:normal;color:#333;transform:scaleX(0.8720);transform-origin:0 0;">False</div>
<svg class="a" style="left:23px;top:175px" width="6" height="6"><path d="M6 0L6 6L0 6Z" fill="#A8A8A8"/></svg>
<div class="t" style="left:38.0px;top:171.3px;font-size:12px;line-height:15px;font-family:'Liberation Sans',sans-serif;font-weight:bold;color:#333;">Language hints</div>
<div class="a" style="left:34px;top:187px;width:452px;height:16px;background:#FCFCFC;"></div>
<div class="a" style="left:487px;top:187px;width:469px;height:16px;background:#FCFCFC;"></div>
<div class="a" style="left:36px;top:188px;width:13px;height:13px;background:#FFFFFF;border:1px solid #8F8F8F;"></div>
<div class="t" style="left:55.0px;top:188.3px;font-size:12px;line-height:15px;font-family:'Liberation Sans',sans-serif;font-weight:normal;color:#222;transform:scaleX(0.8720);transform-origin:0 0;">Afrikans</div>
<div class="a" style="left:34px;top:204px;width:452px;height:16px;background:#FCFCFC;"></div>
<div class="a" style="left:487px;top:204px;width:469px;height:16px;background:#FCFCFC;"></div>
<div class="a" style="left:36px;top:205px;width:13px;height:13px;background:#FFFFFF;border:1px solid #8F8F8F;"></div>
<div class="t" style="left:55.0px;top:205.3px;font-size:12px;line-height:15px;font-family:'Liberation Sans',sans-serif;font-weight:normal;color:#222;transform:scaleX(0.8720);transform-origin:0 0;">Albanian</div>
<div class="a" style="left:34px;top:221px;width:452px;height:16px;background:#FCFCFC;"></div>
<div class="a" style="left:487px;top:221px;width:469px;height:16px;background:#FCFCFC;"></div>
<div class="a" style="left:36px;top:222px;width:13px;height:13px;background:#FFFFFF;border:1px solid #8F8F8F;"></div>
<div class="t" style="left:55.0px;top:222.3px;font-size:12px;line-height:15px;font-family:'Liberation Sans',sans-serif;font-weight:normal;color:#222;transform:scaleX(0.8720);transform-origin:0 0;">Arabic</div>
<div class="a" style="left:34px;top:238px;width:452px;height:16px;background:#FCFCFC;"></div>
<div class="a" style="left:487px;top:238px;width:469px;height:16px;background:#FCFCFC;"></div>
<div class="a" style="left:36px;top:239px;width:13px;height:13px;background:#FFFFFF;border:1px solid #8F8F8F;"></div>
<div class="t" style="left:55.0px;top:239.3px;font-size:12px;line-height:15px;font-family:'Liberation Sans',sans-serif;font-weight:normal;color:#222;transform:scaleX(0.8720);transform-origin:0 0;">Armenian</div>
<div class="a" style="left:34px;top:255px;width:452px;height:16px;background:#FCFCFC;"></div>
<div class="a" style="left:487px;top:255px;width:469px;height:16px;background:#FCFCFC;"></div>
<div class="a" style="left:36px;top:256px;width:13px;height:13px;background:#FFFFFF;border:1px solid #8F8F8F;"></div>
<div class="t" style="left:55.0px;top:256.3px;font-size:12px;line-height:15px;font-family:'Liberation Sans',sans-serif;font-weight:normal;color:#222;transform:scaleX(0.8720);transform-origin:0 0;">Belarusian</div>
<div class="a" style="left:34px;top:272px;width:452px;height:16px;background:#FCFCFC;"></div>
<div class="a" style="left:487px;top:272px;width:469px;height:16px;background:#FCFCFC;"></div>
<div class="a" style="left:36px;top:273px;width:13px;height:13px;background:#FFFFFF;border:1px solid #8F8F8F;"></div>
<div class="t" style="left:55.0px;top:273.3px;font-size:12px;line-height:15px;font-family:'Liberation Sans',sans-serif;font-weight:normal;color:#222;transform:scaleX(0.8720);transform-origin:0 0;">Bengali</div>
<div class="a" style="left:34px;top:289px;width:452px;height:16px;background:#FCFCFC;"></div>
<div class="a" style="left:487px;top:289px;width:469px;height:16px;background:#FCFCFC;"></div>
<div class="a" style="left:36px;top:290px;width:13px;height:13px;background:#FFFFFF;border:1px solid #8F8F8F;"></div>
<div class="t" style="left:55.0px;top:290.3px;font-size:12px;line-height:15px;font-family:'Liberation Sans',sans-serif;font-weight:normal;color:#222;transform:scaleX(0.8720);transform-origin:0 0;">Bulgarian</div>
<div class="a" style="left:34px;top:306px;width:452px;height:16px;background:#FCFCFC;"></div>
<div class="a" style="left:487px;top:306px;width:469px;height:16px;background:#FCFCFC;"></div>
<div class="a" style="left:36px;top:307px;width:13px;height:13px;background:#FFFFFF;border:1px solid #8F8F8F;"></div>
<div class="t" style="left:55.0px;top:307.3px;font-size:12px;line-height:15px;font-family:'Liberation Sans',sans-serif;font-weight:normal;color:#222;transform:scaleX(0.8720);transform-origin:0 0;">Catalan</div>
<div class="a" style="left:34px;top:323px;width:452px;height:16px;background:#FCFCFC;"></div>
<div class="a" style="left:487px;top:323px;width:469px;height:16px;background:#FCFCFC;"></div>
<div class="a" style="left:36px;top:324px;width:13px;height:13px;background:#FFFFFF;border:1px solid #8F8F8F;"></div>
<div class="t" style="left:55.0px;top:324.3px;font-size:12px;line-height:15px;font-family:'Liberation Sans',sans-serif;font-weight:normal;color:#222;transform:scaleX(0.8720);transform-origin:0 0;">Chinese-zh</div>
<div class="a" style="left:34px;top:340px;width:452px;height:16px;background:#FCFCFC;"></div>
<div class="a" style="left:487px;top:340px;width:469px;height:16px;background:#FCFCFC;"></div>
<div class="a" style="left:36px;top:341px;width:13px;height:13px;background:#FFFFFF;border:1px solid #8F8F8F;"></div>
<div class="t" style="left:55.0px;top:341.3px;font-size:12px;line-height:15px;font-family:'Liberation Sans',sans-serif;font-weight:normal;color:#222;transform:scaleX(0.8720);transform-origin:0 0;">Croatian</div>
<div class="a" style="left:34px;top:357px;width:452px;height:16px;background:#FCFCFC;"></div>
<div class="a" style="left:487px;top:357px;width:469px;height:16px;background:#FCFCFC;"></div>
<div class="a" style="left:36px;top:358px;width:13px;height:13px;background:#FFFFFF;border:1px solid #8F8F8F;"></div>
<div class="t" style="left:55.0px;top:358.3px;font-size:12px;line-height:15px;font-family:'Liberation Sans',sans-serif;font-weight:normal;color:#222;transform:scaleX(0.8720);transform-origin:0 0;">Czech</div>
<div class="a" style="left:34px;top:374px;width:452px;height:16px;background:#FCFCFC;"></div>
<div class="a" style="left:487px;top:374px;width:469px;height:16px;background:#FCFCFC;"></div>
<div class="a" style="left:36px;top:375px;width:13px;height:13px;background:#FFFFFF;border:1px solid #8F8F8F;"></div>
<div class="t" style="left:55.0px;top:375.3px;font-size:12px;line-height:15px;font-family:'Liberation Sans',sans-serif;font-weight:normal;color:#222;transform:scaleX(0.8720);transform-origin:0 0;">Danish</div>
<div class="a" style="left:34px;top:391px;width:452px;height:16px;background:#FCFCFC;"></div>
<div class="a" style="left:487px;top:391px;width:469px;height:16px;background:#FCFCFC;"></div>
<div class="a" style="left:36px;top:392px;width:13px;height:13px;background:#FFFFFF;border:1px solid #8F8F8F;"></div>
<div class="t" style="left:55.0px;top:392.3px;font-size:12px;line-height:15px;font-family:'Liberation Sans',sans-serif;font-weight:normal;color:#222;transform:scaleX(0.8720);transform-origin:0 0;">Deutsch</div>
<div class="a" style="left:34px;top:408px;width:452px;height:16px;background:#FCFCFC;"></div>
<div class="a" style="left:487px;top:408px;width:469px;height:16px;background:#FCFCFC;"></div>
<div class="a" style="left:36px;top:409px;width:13px;height:13px;background:#FFFFFF;border:1px solid #8F8F8F;"></div>
<div class="t" style="left:55.0px;top:409.3px;font-size:12px;line-height:15px;font-family:'Liberation Sans',sans-serif;font-weight:normal;color:#222;transform:scaleX(0.8720);transform-origin:0 0;">Dutch</div>
<div class="a" style="left:34px;top:425px;width:452px;height:16px;background:#FCFCFC;"></div>
<div class="a" style="left:487px;top:425px;width:469px;height:16px;background:#FCFCFC;"></div>
<div class="a" style="left:36px;top:426px;width:13px;height:13px;background:#FFFFFF;border:1px solid #8F8F8F;"></div>
<div class="t" style="left:55.0px;top:426.3px;font-size:12px;line-height:15px;font-family:'Liberation Sans',sans-serif;font-weight:normal;color:#222;transform:scaleX(0.8720);transform-origin:0 0;">English</div>
<div class="a" style="left:34px;top:442px;width:452px;height:16px;background:#FCFCFC;"></div>
<div class="a" style="left:487px;top:442px;width:469px;height:16px;background:#FCFCFC;"></div>
<div class="a" style="left:36px;top:443px;width:13px;height:13px;background:#FFFFFF;border:1px solid #8F8F8F;"></div>
<div class="t" style="left:55.0px;top:443.3px;font-size:12px;line-height:15px;font-family:'Liberation Sans',sans-serif;font-weight:normal;color:#222;transform:scaleX(0.8720);transform-origin:0 0;">Estonian</div>
</div>
<div class="a" style="left:483px;top:320px;width:972px;height:39px;border:3px solid #FF00DD;"></div>
<div class="a" style="left:483px;top:738px;width:977px;height:57px;background:#EFEFEF;border-top:2px solid #C8C8C8;border-left:1px solid #D9D9D9;border-right:1px solid #D9D9D9;border-bottom:1px solid #D9D9D9;"></div>
<div class="t" style="left:489.0px;top:742.3px;font-size:12px;line-height:15px;font-family:'Liberation Sans',sans-serif;font-weight:bold;color:#333;transform:scaleX(0.9842);transform-origin:0 0;">Enable Google Document AI processing option</div>
<div class="t" style="left:489.0px;top:757.0px;font-size:11.5px;line-height:14px;font-family:'Liberation Sans',sans-serif;font-weight:normal;color:#444;transform:scaleX(0.9219);transform-origin:0 0;">If active, Google Document AI processing option will appear on the processing actions dialog. From there, you can map your job fields to the Google fields schema by clicking on the 'Configure' button</div>
<div class="a" style="left:483px;top:807px;width:977px;height:65px;background:#FCFCFC;border:1px solid #D0D0D0;"></div>
<div class="a" style="left:485px;top:809px;width:973px;height:24px;background:#F0F0F0;border-top:1px solid #D8D8D8;border-bottom:1px solid #C0C0C0;"></div>
<div class="a" style="left:634px;top:810px;width:2px;height:22px;background:#D0D0D0;"></div>
<div class="a" style="left:784px;top:810px;width:2px;height:22px;background:#D0D0D0;"></div>
<div class="a" style="left:934px;top:810px;width:2px;height:22px;background:#D0D0D0;"></div>
<div class="a" style="left:1085px;top:810px;width:2px;height:22px;background:#D0D0D0;"></div>
<div class="t" style="left:573.0px;top:814.0px;font-size:11.5px;line-height:14px;font-family:'Liberation Sans',sans-serif;font-weight:normal;color:#222;transform:scaleX(0.9453);transform-origin:0 0;">Total credits</div>
<div class="t" style="left:753.0px;top:814.0px;font-size:11.5px;line-height:14px;font-family:'Liberation Sans',sans-serif;font-weight:normal;color:#222;transform:scaleX(0.8985);transform-origin:0 0;">Spent</div>
<div class="t" style="left:888.0px;top:814.0px;font-size:11.5px;line-height:14px;font-family:'Liberation Sans',sans-serif;font-weight:normal;color:#222;transform:scaleX(0.9040);transform-origin:0 0;">Available</div>
<div class="t" style="left:999.0px;top:814.0px;font-size:11.5px;line-height:14px;font-family:'Liberation Sans',sans-serif;font-weight:normal;color:#222;transform:scaleX(0.9119);transform-origin:0 0;">Available (Pages)</div>
<div class="t" style="left:597.0px;top:835.0px;font-size:11.5px;line-height:14px;font-family:'Liberation Sans',sans-serif;font-weight:normal;color:#222;transform:scaleX(0.9121);transform-origin:0 0;">100000</div>
<div class="t" style="left:756.0px;top:835.0px;font-size:11.5px;line-height:14px;font-family:'Liberation Sans',sans-serif;font-weight:normal;color:#222;transform:scaleX(0.8991);transform-origin:0 0;">1486</div>
<div class="t" style="left:899.0px;top:835.0px;font-size:11.5px;line-height:14px;font-family:'Liberation Sans',sans-serif;font-weight:normal;color:#222;transform:scaleX(0.9382);transform-origin:0 0;">98513</div>
<div class="t" style="left:1054.0px;top:835.0px;font-size:11.5px;line-height:14px;font-family:'Liberation Sans',sans-serif;font-weight:normal;color:#222;transform:scaleX(0.9773);transform-origin:0 0;">9851</div>
<div class="a" style="left:1010px;top:878px;width:102px;height:23px;background:#FDFDFD;border:1px solid #ADADAD;"></div>
<div class="t" style="left:1035.4px;top:883.0px;font-size:11.5px;line-height:14px;font-family:'Liberation Sans',sans-serif;font-weight:normal;color:#222;transform:scaleX(0.9000);transform-origin:0 0;">Buy credits</div>
<div class="a" style="left:1116px;top:878px;width:101px;height:23px;background:#FDFDFD;border:1px solid #ADADAD;"></div>
<div class="t" style="left:1131.7px;top:883.0px;font-size:11.5px;line-height:14px;font-family:'Liberation Sans',sans-serif;font-weight:normal;color:#222;transform:scaleX(0.9000);transform-origin:0 0;">Documentation</div>
<div class="a" style="left:1223px;top:878px;width:75px;height:23px;background:#FDFDFD;border:1px solid #ADADAD;"></div>
<div class="t" style="left:1235.2px;top:883.0px;font-size:11.5px;line-height:14px;font-family:'Liberation Sans',sans-serif;font-weight:normal;color:#222;transform:scaleX(0.9000);transform-origin:0 0;">Test server</div>
<div class="a" style="left:1307px;top:878px;width:74px;height:23px;background:#FDFDFD;border:1px solid #ADADAD;"></div>
<div class="t" style="left:1327.9px;top:883.0px;font-size:11.5px;line-height:14px;font-family:'Liberation Sans',sans-serif;font-weight:normal;color:#222;transform:scaleX(0.9000);transform-origin:0 0;">Cancel</div>
<div class="a" style="left:1386px;top:878px;width:75px;height:23px;background:#FDFDFD;border:1px solid #0067C0;box-shadow:inset 0 0 0 1px #0067C0;"></div>
<div class="t" style="left:1416.0px;top:883.0px;font-size:11.5px;line-height:14px;font-family:'Liberation Sans',sans-serif;font-weight:normal;color:#222;transform:scaleX(0.9000);transform-origin:0 0;">OK</div>
</body></html>
